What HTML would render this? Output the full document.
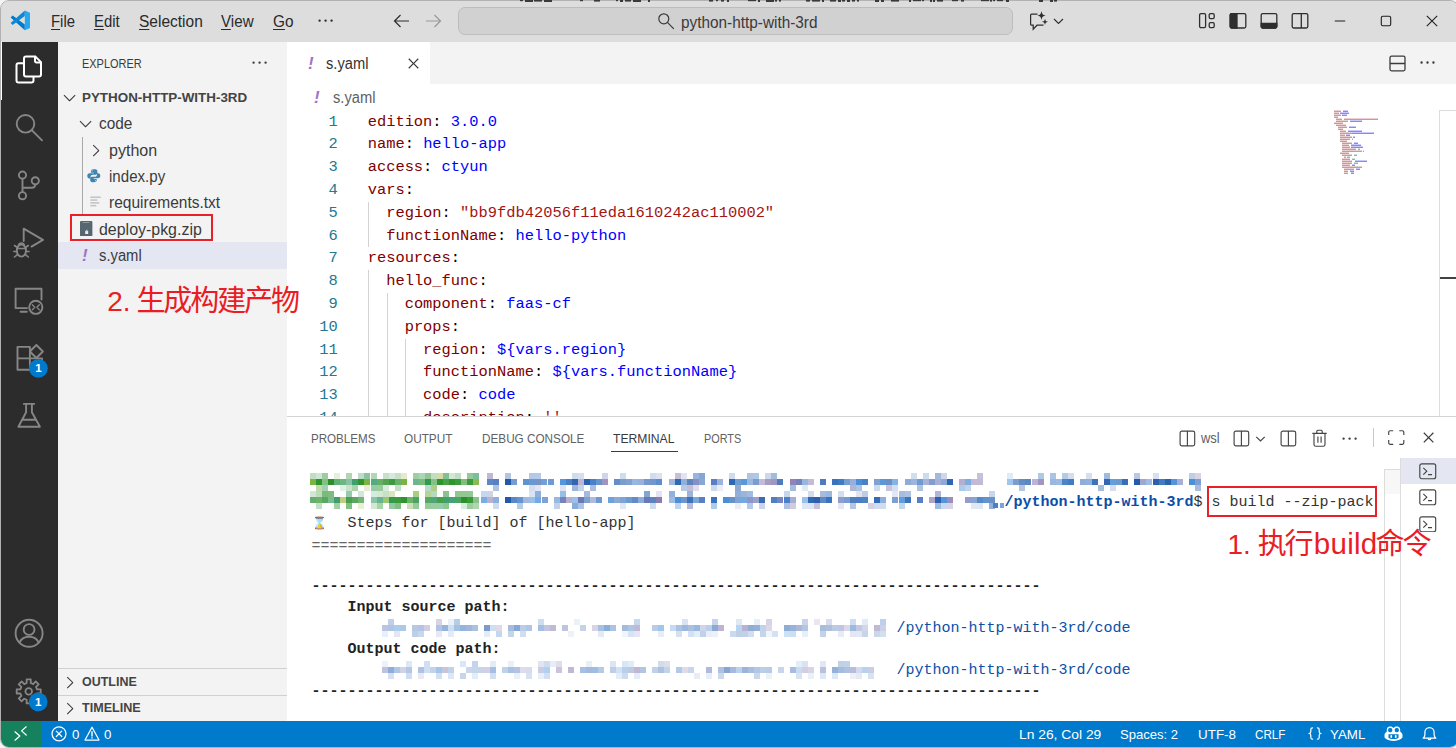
<!DOCTYPE html>
<html lang="en">
<head>
<meta charset="utf-8">
<title>s.yaml - python-http-with-3rd - Visual Studio Code</title>
<style>
#panel svg{z-index:2}
*{box-sizing:border-box;margin:0;padding:0}
html,body{width:1456px;height:748px;overflow:hidden;background:#f4f4f4}
body{position:relative;font-family:"Liberation Sans","Noto Sans CJK SC",sans-serif;color:#3b3b3b}
.abs{position:absolute}
#win{position:absolute;left:1px;top:1px;width:1457px;height:746px;border-radius:8px;overflow:hidden;background:#fff}
#edge{position:absolute;left:0;top:0;width:1459px;height:748px;border:1px solid #b2b2b2;border-radius:9px;pointer-events:none}
#title{left:0;top:0;width:1456px;height:41px;background:#dddddd}
.menu{position:absolute;top:9px;font-size:15.6px;line-height:24px;color:#2a2a2a;white-space:nowrap}
.menu u{text-decoration-thickness:1px;text-underline-offset:2px}
#search{left:457px;top:6px;width:555px;height:28px;border:1px solid #bdbdbd;border-radius:7px;background:#d1d1d1}
#search span{position:absolute;left:222.300px;top:3px;font-size:15.6px;line-height:24px;color:#3a3a3a;white-space:nowrap}
#act{left:0;top:41px;width:57px;height:680px;background:#2c2c2c}
#side{left:57px;top:41px;width:229px;height:680px;background:#f3f3f3}
.row{position:absolute;left:0;width:229px;height:26.400px;font-size:15.6px;line-height:26.400px;color:#3b3b3b;white-space:nowrap}
.row span{position:absolute;top:0}
.hdr{font-weight:bold;font-size:13.2px;color:#444}
.bang2{color:#a074c4;font-weight:bold;font-style:italic;font-size:17px}
#tabs{left:286px;top:41px;width:1170px;height:42px;background:#f3f3f3}
#tab{left:0;top:0;width:143px;height:42px;background:#fff}
#ed{left:286px;top:83px;width:1170px;height:332px;background:#fff;overflow:hidden}
.ln{position:absolute;left:0;width:50.800px;text-align:right;color:#237893;font-family:"Liberation Mono",monospace;font-size:15.4px;line-height:22.8px;height:22.8px}
.cl{position:absolute;left:80.700px;font-family:"Liberation Mono",monospace;font-size:15.4px;line-height:22.8px;height:22.8px;white-space:pre;color:#000}
.bc{left:0;top:0;width:1170px;height:26px;font-size:15.6px;line-height:26px;color:#616161}
.bang{position:absolute;top:0;color:#a074c4;font-weight:bold;font-style:italic;font-size:17px}
.k{color:#800000}.v{color:#0000ff}.s{color:#a31515}.p{color:#000}
.guide{position:absolute;width:1px;background:#d3d3d3}
#panel{left:286px;top:415px;width:1170px;height:306px;background:#fff;overflow:hidden}
.pt{position:absolute;top:15px;font-size:12.6px;line-height:16px;color:#616161;white-space:nowrap}
.tl{position:absolute;left:24.5px;font-family:"Liberation Mono",monospace;font-size:15px;line-height:21px;height:21px;white-space:pre;color:#333}
#status{left:0;top:720px;width:1457px;height:26px;background:#007acc;color:#fff;font-size:13.6px}
#status span{position:absolute;top:0;line-height:27px;white-space:nowrap}
.badge{width:19px;height:19px;line-height:19px;text-align:center;color:#fff;font-weight:bold;font-size:11.5px}
.cj{font-size:29px;letter-spacing:-2.100px}
.lt{font-size:29.500px;letter-spacing:0.300px;margin-left:2.300px;margin-right:-2px}
.red{color:#ea1c24;font-family:"Liberation Sans","Noto Sans CJK SC",sans-serif}
.rbox{position:absolute;border:2px solid #e8202a;z-index:8}
</style>
</head>
<body>
<div id="win">
  <div id="title" class="abs">
    <svg class="abs" style="left:9.200px;top:9.200px" width="20.600" height="20.600" viewBox="0 0 100 100"><path d="M3 37 13 27 72 71V98z" fill="#007acc"/><path d="M3 63 13 73 72 29V2z" fill="#1187d4"/><path d="M72 2 97 13V87L72 98z" fill="#25a8f0"/></svg>
    <div class="menu" style="left:50.200px;transform:scaleX(0.9546);transform-origin:0 50%"><u>F</u>ile</div>
    <div class="menu" style="left:92.800px;transform:scaleX(0.9557);transform-origin:0 50%"><u>E</u>dit</div>
    <div class="menu" style="left:138px;transform:scaleX(0.9944);transform-origin:0 50%"><u>S</u>election</div>
    <div class="menu" style="left:220px;transform:scaleX(0.9722);transform-origin:0 50%"><u>V</u>iew</div>
    <div class="menu" style="left:272px;transform:scaleX(0.9842);transform-origin:0 50%"><u>G</u>o</div>
    <svg class="abs" style="left:315.200px;top:9.800px" width="19.200" height="19.200" viewBox="0 0 16 16"><path fill="#2a2a2a" d="M4 8a1 1 0 1 1-2 0 1 1 0 0 1 2 0zm5 0a1 1 0 1 1-2 0 1 1 0 0 1 2 0zm5 0a1 1 0 1 1-2 0 1 1 0 0 1 2 0z"/></svg>

    <svg class="abs" style="left:392px;top:12px" width="17" height="16" viewBox="0 0 17 16" fill="none" stroke="#2e2e2e" stroke-width="1.2"><path d="M16 8H1.5M7.500 2 1.5 8 7.500 14"/></svg>
    <svg class="abs" style="left:424px;top:12px" width="17" height="16" viewBox="0 0 17 16" fill="none" stroke="#999999" stroke-width="1.2"><path d="M1 8h14.5M9.500 2 15.5 8 9.500 14"/></svg>
    <svg class="abs" style="left:1027px;top:9px" width="38" height="22" viewBox="0 0 38 22" fill="none" stroke="#2e2e2e" stroke-width="1.25"><path d="M9.500 4H3.600a1 1 0 0 0-1 1v9.200a1 1 0 0 0 1 1H5.200V19.200l3.800-4H15.500"/><path d="M13.5 1.2999999999999998C14.446 4.654 14.446 4.654 17.8 5.6C14.446 6.545999999999999 14.446 6.545999999999999 13.5 9.899999999999999C12.554 6.545999999999999 12.554 6.545999999999999 9.2 5.6C12.554 4.654 12.554 4.654 13.5 1.2999999999999998z" fill="#2e2e2e" stroke="none"/><path d="M17 8.700000000000001C17.682 11.118 17.682 11.118 20.1 11.8C17.682 12.482000000000001 17.682 12.482000000000001 17 14.9C16.318 12.482000000000001 16.318 12.482000000000001 13.9 11.8C16.318 11.118 16.318 11.118 17 8.700000000000001z" fill="#2e2e2e" stroke="none"/><path d="M26 9 30.500 13.400 35 9" stroke-width="1.100"/></svg>
    <svg class="abs" style="left:1197px;top:11px" width="18" height="18" viewBox="0 0 18 18" fill="none" stroke="#2e2e2e" stroke-width="1.3"><rect x="1.6" y="1.600" width="6" height="14" rx="1.300"/><rect x="11.200" y="1.600" width="5" height="5" rx="1.300"/><rect x="11.200" y="10.600" width="5" height="5" rx="1.300"/></svg>
    <svg class="abs" style="left:1228px;top:11px" width="18" height="18" viewBox="0 0 18 18" fill="none" stroke="#2e2e2e" stroke-width="1.3"><rect x="1.200" y="1.600" width="15.600" height="14.400" rx="1.500"/><path d="M1.200 3a1.400 1.400 0 0 1 1.400-1.400H8V16H2.600a1.400 1.400 0 0 1-1.400-1.400z" fill="#2e2e2e"/></svg>
    <svg class="abs" style="left:1259px;top:11px" width="18" height="18" viewBox="0 0 18 18" fill="none" stroke="#2e2e2e" stroke-width="1.3"><rect x="1.200" y="1.600" width="15.600" height="14.400" rx="1.500"/><path d="M1.200 11.500h15.600v3.100a1.400 1.400 0 0 1-1.400 1.400H2.600a1.400 1.400 0 0 1-1.400-1.400z" fill="#2e2e2e"/></svg>
    <svg class="abs" style="left:1290px;top:11px" width="18" height="18" viewBox="0 0 18 18" fill="none" stroke="#2e2e2e" stroke-width="1.3"><rect x="1.200" y="1.600" width="15.600" height="14.400" rx="1.500"/><path d="M10.300 1.600V16"/></svg>
    <svg class="abs" style="left:1333px;top:14px" width="12" height="12" viewBox="0 0 12 12" fill="none" stroke="#1f1f1f" stroke-width="1.1"><path d="M.8 6h10.400"/></svg>
    <svg class="abs" style="left:1379px;top:14px" width="12" height="12" viewBox="0 0 12 12" fill="none" stroke="#1f1f1f" stroke-width="1.1"><rect x="1.300" y="1.300" width="9.400" height="9.400" rx="1.500"/></svg>
    <svg class="abs" style="left:1425px;top:14px" width="12" height="12" viewBox="0 0 12 12" fill="none" stroke="#1f1f1f" stroke-width="1.1"><path d="M.8.8 11.200 11.200M11.200.8.8 11.200"/></svg>
    <svg class="abs" style="left:656px;top:11px;z-index:3" width="18" height="18" viewBox="0 0 18 18" fill="none" stroke="#3a3a3a" stroke-width="1.200"><circle cx="6.800" cy="6.800" r="5"/><path d="M10.400 10.400 16.800 16.800"/></svg>
    <div id="search" class="abs"><span style="transform:scaleX(0.9842);transform-origin:0 50%">python-http-with-3rd</span></div>
  </div>
  <div id="act" class="abs">
    <div class="abs" style="left:0;top:0;width:1.300px;height:58px;background:#fff"></div>
    <svg class="abs" style="left:1px;top:0" width="56" height="680" viewBox="0 0 56 680" fill="none" stroke="#868686" stroke-width="1.9" stroke-linejoin="round" stroke-linecap="round">
      <g stroke="#ffffff" stroke-width="2">
        <path d="M31.600 20.800v-6.200a2 2 0 0 0-2-2" stroke="none"/>
        <path d="M22 16.600a2 2 0 0 1 2-2h9.500l5.500 5.500v12.300a2 2 0 0 1-2 2h-13a2 2 0 0 1-2-2z"/>
        <path d="M33 14.800v4a1.600 1.600 0 0 0 1.600 1.600h4"/>
        <path d="M21.500 21.200h-5a2 2 0 0 0-2 2v15.400a2 2 0 0 0 2 2h13a2 2 0 0 0 2-2v-3.600"/>
      </g>
      <circle cx="23.500" cy="81.800" r="8.800"/><path d="M30 88.300 40 98.300"/>
      <circle cx="20.500" cy="133.100" r="3.600"/><circle cx="20.500" cy="153.700" r="3.600"/><circle cx="33.300" cy="138.800" r="3.600"/>
      <path d="M20.500 136.800V150M33.300 142.500c0 2.200-1.500 3.200-3.500 3.200H20.500"/>
      <path d="M21.700 199V186.600L41 197.900 29.500 204.600"/>
      <ellipse cx="19.400" cy="208.600" rx="4.600" ry="6"/><path d="M15 206.500h8.800M12.500 203.500l2.800 2M26.300 203.500l-2.800 2M11.800 209.500h3M27 209.500h-3M12.500 215l2.800-2.300M26.300 215l-2.800-2.300M16.500 203.300a3 3 0 0 1 5.800 0" stroke-width="1.6"/>
      <path d="M25 266.100H13.600V246.700H39.500V257.500M18.600 269.700H24.800"/>
      <circle cx="33.800" cy="265.300" r="6.600"/><path d="M30.300 262.800 32.800 265.300 30.300 267.800M37.300 262.800 34.800 265.300 37.300 267.800" stroke-width="1.300"/>
      <path d="M15.500 304.900H27.900V327.800H15.500zM15.500 316.400H40V327.800H27.900M27.900 316.400V327.800"/>
      <path d="M34.400 303 40.900 309.500 34.400 316 27.900 309.500z"/>
      <path d="M21.800 361.900H32.200M24.100 362V370.300L16.400 384.800H37.900L29.900 370.300V362M20.400 377.800H33.900"/>
      <circle cx="27.100" cy="591.300" r="13.500"/><circle cx="27.100" cy="587.500" r="5.400"/><path d="M17.500 600.500c2-4.300 5.500-5.800 9.600-5.800s7.600 1.500 9.600 5.800"/>
      <path d="M24.60 637.38 L28.80 637.38 L28.71 641.04 L31.19 642.07 L33.72 639.42 L36.68 642.38 L34.03 644.91 L35.06 647.39 L38.72 647.30 L38.72 651.50 L35.06 651.41 L34.03 653.89 L36.68 656.42 L33.72 659.38 L31.19 656.73 L28.71 657.76 L28.80 661.42 L24.60 661.42 L24.69 657.76 L22.21 656.73 L19.68 659.38 L16.72 656.42 L19.37 653.89 L18.34 651.41 L14.68 651.50 L14.68 647.30 L18.34 647.39 L19.37 644.91 L16.72 642.38 L19.68 639.42 L22.21 642.07 L24.69 641.04Z" stroke-width="1.800"/><circle cx="26.700" cy="649.400" r="3.300" stroke-width="1.800"/>
      <g stroke="none"><circle cx="36.400" cy="326.300" r="9.400" fill="#007acc"/><circle cx="36.200" cy="659.900" r="9.400" fill="#007acc"/></g>
    </svg>
    <div class="abs badge" style="left:28px;top:317px">1</div>
    <div class="abs badge" style="left:27.800px;top:650.600px">1</div>
  </div>
  <div id="side" class="abs"><svg class="abs" style="left:2px;top:45.8px" width="19.2" height="19.2" viewBox="0 0 16 16"><path fill="#3b3b3b" d="M7.976 10.072l4.357-4.357.62.618L8.284 11h-.618L3 6.333l.619-.618 4.357 4.357z"/></svg><svg class="abs" style="left:18.3px;top:72.2px" width="19.2" height="19.2" viewBox="0 0 16 16"><path fill="#3b3b3b" d="M7.976 10.072l4.357-4.357.62.618L8.284 11h-.618L3 6.333l.619-.618 4.357 4.357z"/></svg><svg class="abs" style="left:28px;top:98.6px" width="19.2" height="19.2" viewBox="0 0 16 16"><path fill="#3b3b3b" d="M10.072 8.024L5.715 3.667l.618-.62L11 7.716v.618L6.333 13l-.618-.619 4.357-4.357z"/></svg><svg class="abs" style="left:1.5px;top:630.5px" width="19.2" height="19.2" viewBox="0 0 16 16"><path fill="#3b3b3b" d="M10.072 8.024L5.715 3.667l.618-.62L11 7.716v.618L6.333 13l-.618-.619 4.357-4.357z"/></svg><svg class="abs" style="left:1.5px;top:656.5px" width="19.2" height="19.2" viewBox="0 0 16 16"><path fill="#3b3b3b" d="M10.072 8.024L5.715 3.667l.618-.62L11 7.716v.618L6.333 13l-.618-.619 4.357-4.357z"/></svg><svg class="abs" style="left:191.5px;top:10.5px" width="19.2" height="19.2" viewBox="0 0 16 16"><path fill="#3b3b3b" d="M4 8a1 1 0 1 1-2 0 1 1 0 0 1 2 0zm5 0a1 1 0 1 1-2 0 1 1 0 0 1 2 0zm5 0a1 1 0 1 1-2 0 1 1 0 0 1 2 0z"/></svg><div class="abs" style="left:24px;top:94.5px;width:1px;height:77px;background:#a9a9a9"></div><svg class="abs" style="left:29.2px;top:127px" width="13.6" height="13.6" viewBox="0 0 14 14"><path fill="#3f84b2" d="M6.900.3C4.900.3 4 1.100 4 2.300v1.500h3.100v.6H2.500C1.200 4.400.3 5.300.3 7s.8 2.700 2 2.700h1.400V8.100c0-1.200 1-2.100 2.200-2.100h3c1 0 1.800-.8 1.800-1.800V2.300c0-1.100-1-2-2.100-2zM5.300 1.300a.6.600 0 1 1 0 1.200.6.600 0 0 1 0-1.200z"/><path fill="#3f84b2" d="M7.100 13.700c2 0 2.900-.8 2.900-2v-1.500H6.900v-.6h4.600c1.300 0 2.200-.9 2.200-2.600s-.8-2.700-2-2.700h-1.400v1.600c0 1.200-1 2.100-2.200 2.100h-3c-1 0-1.800.8-1.800 1.800v1.900c0 1.100 1 2 2.100 2zm1.600-1a.6.600 0 1 1 0-1.200.6.600 0 0 1 0 1.200z"/></svg><svg class="abs" style="left:32px;top:154px" width="12" height="12" viewBox="0 0 12 12" fill="#c2c2c2"><rect x=".3" y=".5" width="10.500" height="1.500"/><rect x=".3" y="3.300" width="7" height="1.500"/><rect x=".3" y="6.100" width="9" height="1.500"/><rect x=".3" y="8.900" width="6" height="1.500"/></svg><svg class="abs" style="left:22.2px;top:178.6px" width="12.400" height="15.400" viewBox="0 0 12.400 15.400"><path fill="#56676f" d="M1.200 0h10a1.200 1.200 0 0 1 1.200 1.200v13a1.200 1.200 0 0 1-1.200 1.200h-10A1.200 1.200 0 0 1 0 14.200v-13A1.200 1.200 0 0 1 1.200 0z"/><rect x="2.500" y="1" width="7" height="1" fill="#8c999f"/><rect x="5.200" y="9.800" width="3" height="3.200" rx=".6" fill="#e9edef"/><rect x="6" y="8.800" width="1.400" height="1.600" fill="#b9c2c6"/></svg>
    <div class="abs" style="left:23.500px;top:13px;font-size:13px;line-height:18px;color:#3b3b3b;transform:scaleX(0.8431);transform-origin:0 50%">EXPLORER</div>
    <div class="row hdr" style="top:42.7px"><span style="left:23.5px;transform:scaleX(1.0157);transform-origin:0 50%">PYTHON-HTTP-WITH-3RD</span></div>
    <div class="row" style="top:69.1px"><span style="left:40.5px;transform:scaleX(0.9873);transform-origin:0 50%">code</span></div>
    <div class="row" style="top:95.5px"><span style="left:50.5px;transform:scaleX(1.0293);transform-origin:0 50%">python</span></div>
    <div class="row" style="top:121.9px"><span style="left:50.5px;transform:scaleX(0.9674);transform-origin:0 50%">index.py</span></div>
    <div class="row" style="top:148.3px"><span style="left:50.5px;transform:scaleX(0.9945);transform-origin:0 50%">requirements.txt</span></div>
    <div class="row" style="top:174.7px"><span style="left:40.5px;transform:scaleX(1.0222);transform-origin:0 50%">deploy-pkg.zip</span></div>
    <div class="row" style="top:200.400px;background:#e4e6f1"><span class="bang2" style="left:24px;top:0.700px">!</span><span style="left:40.500px;top:0.700px;transform:scaleX(0.9476);transform-origin:0 50%">s.yaml</span></div>
    <div class="rbox" style="left:12px;top:172px;width:143px;height:27px"></div>
    <div class="row hdr" style="top:626px;height:27px;border-top:1px solid #d0d0d0"><span style="left:23.500px;top:-0.200px;transform:scaleX(0.9449);transform-origin:0 50%">OUTLINE</span></div>
    <div class="row hdr" style="top:653px;height:27px;border-top:1px solid #d0d0d0"><span style="left:23.500px;top:-0.800px;transform:scaleX(0.9537);transform-origin:0 50%">TIMELINE</span></div>
  </div>
  <div id="tabs" class="abs"><svg class="abs" style="left:1101px;top:12px" width="19" height="19" viewBox="0 0 19 19" fill="none" stroke="#3b3b3b" stroke-width="1.300"><rect x="2" y="2.200" width="15" height="14.600" rx="1.500"/><path d="M2 9.500h15"/></svg>
<svg class="abs" style="left:1131px;top:11px" width="19" height="19" viewBox="0 0 16 16"><path fill="#3b3b3b" d="M4 8a1 1 0 1 1-2 0 1 1 0 0 1 2 0zm5 0a1 1 0 1 1-2 0 1 1 0 0 1 2 0zm5 0a1 1 0 1 1-2 0 1 1 0 0 1 2 0z"/></svg><div id="tab" class="abs"><span class="bang" style="left:21px;top:10.500px;font-size:17px;line-height:22px">!</span><svg class="abs" style="left:117px;top:12px" width="19" height="19" viewBox="0 0 16 16"><path fill="#3b3b3b" d="M8 8.707l3.646 3.647.708-.707L8.707 8l3.647-3.646-.707-.708L8 7.293 4.354 3.646l-.707.708L7.293 8l-3.646 3.646.707.708L8 8.707z"/></svg><span class="abs" style="left:38.500px;top:11.200px;font-size:15.6px;line-height:22px;color:#333;transform:scaleX(0.9409);transform-origin:0 50%">s.yaml</span></div></div>
  <div id="ed" class="abs"><div class="abs bc"><span class="bang" style="left:27px;top:1px">!</span><span class="abs" style="left:45.500px;top:1px;transform:scaleX(0.9431);transform-origin:0 50%">s.yaml</span></div><div class="ln" style="top:26.6px">1</div><div class="cl" style="top:26.6px"><span class="k">edition</span><span class="p">: </span><span class="v">3.0.0</span></div><div class="ln" style="top:49.4px">2</div><div class="cl" style="top:49.4px"><span class="k">name</span><span class="p">: </span><span class="v">hello-app</span></div><div class="ln" style="top:72.2px">3</div><div class="cl" style="top:72.2px"><span class="k">access</span><span class="p">: </span><span class="v">ctyun</span></div><div class="ln" style="top:95.0px">4</div><div class="cl" style="top:95.0px"><span class="k">vars</span><span class="p">:</span></div><div class="ln" style="top:117.8px">5</div><div class="cl" style="top:117.8px"><span class="p">  </span><span class="k">region</span><span class="p">: </span><span class="s">"bb9fdb42056f11eda1610242ac110002"</span></div><div class="ln" style="top:140.6px">6</div><div class="cl" style="top:140.6px"><span class="p">  </span><span class="k">functionName</span><span class="p">: </span><span class="v">hello-python</span></div><div class="ln" style="top:163.4px">7</div><div class="cl" style="top:163.4px"><span class="k">resources</span><span class="p">:</span></div><div class="ln" style="top:186.2px">8</div><div class="cl" style="top:186.2px"><span class="p">  </span><span class="k">hello_func</span><span class="p">:</span></div><div class="ln" style="top:209.0px">9</div><div class="cl" style="top:209.0px"><span class="p">    </span><span class="k">component</span><span class="p">: </span><span class="v">faas-cf</span></div><div class="ln" style="top:231.8px">10</div><div class="cl" style="top:231.8px"><span class="p">    </span><span class="k">props</span><span class="p">:</span></div><div class="ln" style="top:254.6px">11</div><div class="cl" style="top:254.6px"><span class="p">      </span><span class="k">region</span><span class="p">: </span><span class="v">${vars.region}</span></div><div class="ln" style="top:277.4px">12</div><div class="cl" style="top:277.4px"><span class="p">      </span><span class="k">functionName</span><span class="p">: </span><span class="v">${vars.functionName}</span></div><div class="ln" style="top:300.2px">13</div><div class="cl" style="top:300.2px"><span class="p">      </span><span class="k">code</span><span class="p">: </span><span class="v">code</span></div><div class="ln" style="top:323.0px">14</div><div class="cl" style="top:323.0px"><span class="p">      </span><span class="k">description</span><span class="p">: </span><span class="s">''</span></div><div class="guide" style="left:81px;top:117.8px;height:45.6px"></div><div class="guide" style="left:81px;top:186.2px;height:159.6px"></div><div class="guide" style="left:99.5px;top:209.0px;height:136.8px"></div><div class="guide" style="left:118px;top:254.6px;height:91.2px"></div><svg class="abs" style="left:0;top:0" width="1170" height="332"><rect x="1047" y="26.6" width="7" height="1.3" fill="#bf6f6f" opacity=".8"/><rect x="1056" y="26.6" width="5" height="1.3" fill="#5a5aff" opacity=".8"/><rect x="1047" y="28.6" width="5" height="1.3" fill="#bf6f6f" opacity=".8"/><rect x="1053" y="28.6" width="9" height="1.3" fill="#5a5aff" opacity=".8"/><rect x="1047" y="30.6" width="7" height="1.3" fill="#bf6f6f" opacity=".8"/><rect x="1055" y="30.6" width="5" height="1.3" fill="#5a5aff" opacity=".8"/><rect x="1047" y="32.6" width="4" height="1.3" fill="#bf6f6f" opacity=".8"/><rect x="1049" y="34.6" width="6" height="1.3" fill="#bf6f6f" opacity=".8"/><rect x="1057" y="34.6" width="34" height="1.3" fill="#c46a6a" opacity=".8"/><rect x="1049" y="36.6" width="12" height="1.3" fill="#bf6f6f" opacity=".8"/><rect x="1063" y="36.6" width="12" height="1.3" fill="#5a5aff" opacity=".8"/><rect x="1047" y="38.6" width="9" height="1.3" fill="#bf6f6f" opacity=".8"/><rect x="1049" y="40.6" width="10" height="1.3" fill="#bf6f6f" opacity=".8"/><rect x="1051" y="42.6" width="9" height="1.3" fill="#bf6f6f" opacity=".8"/><rect x="1062" y="42.6" width="7" height="1.3" fill="#5a5aff" opacity=".8"/><rect x="1051" y="44.6" width="5" height="1.3" fill="#bf6f6f" opacity=".8"/><rect x="1053" y="46.6" width="6" height="1.3" fill="#bf6f6f" opacity=".8"/><rect x="1061" y="46.6" width="14" height="1.3" fill="#5a5aff" opacity=".8"/><rect x="1053" y="48.6" width="12" height="1.3" fill="#bf6f6f" opacity=".8"/><rect x="1065" y="48.6" width="22" height="1.3" fill="#5a5aff" opacity=".8"/><rect x="1053" y="50.6" width="5" height="1.3" fill="#bf6f6f" opacity=".8"/><rect x="1059" y="50.6" width="4" height="1.3" fill="#5a5aff" opacity=".8"/><rect x="1053" y="52.6" width="12" height="1.3" fill="#bf6f6f" opacity=".8"/><rect x="1066" y="52.6" width="2" height="1.3" fill="#5a5aff" opacity=".8"/><rect x="1053" y="54.6" width="10" height="1.3" fill="#bf6f6f" opacity=".8"/><rect x="1065" y="54.6" width="1" height="1.3" fill="#4aa98a" opacity=".8"/><rect x="1053" y="56.6" width="7" height="1.3" fill="#bf6f6f" opacity=".8"/><rect x="1055" y="58.6" width="10" height="1.3" fill="#bf6f6f" opacity=".8"/><rect x="1067" y="58.6" width="4" height="1.3" fill="#5a5aff" opacity=".8"/><rect x="1055" y="60.6" width="7" height="1.3" fill="#bf6f6f" opacity=".8"/><rect x="1064" y="60.6" width="10" height="1.3" fill="#5a5aff" opacity=".8"/><rect x="1055" y="62.6" width="8" height="1.3" fill="#bf6f6f" opacity=".8"/><rect x="1064" y="62.6" width="12" height="1.3" fill="#5a5aff" opacity=".8"/><rect x="1055" y="64.6" width="14" height="1.3" fill="#bf6f6f" opacity=".8"/><rect x="1071" y="64.6" width="2" height="1.3" fill="#4aa98a" opacity=".8"/><rect x="1055" y="66.6" width="20" height="1.3" fill="#bf6f6f" opacity=".8"/><rect x="1076" y="66.6" width="1" height="1.3" fill="#4aa98a" opacity=".8"/><rect x="1053" y="68.6" width="9" height="1.3" fill="#bf6f6f" opacity=".8"/><rect x="1055" y="70.6" width="10" height="1.3" fill="#bf6f6f" opacity=".8"/><rect x="1067" y="70.6" width="3" height="1.3" fill="#4aa98a" opacity=".8"/><rect x="1057" y="72.6" width="2" height="1.3" fill="#bf6f6f" opacity=".8"/><rect x="1060" y="72.6" width="3" height="1.3" fill="#4aa98a" opacity=".8"/><rect x="1055" y="74.6" width="8" height="1.3" fill="#bf6f6f" opacity=".8"/><rect x="1065" y="74.6" width="3" height="1.3" fill="#4aa98a" opacity=".8"/><rect x="1055" y="76.6" width="10" height="1.3" fill="#bf6f6f" opacity=".8"/><rect x="1068" y="76.6" width="12" height="1.3" fill="#5a5aff" opacity=".8"/><rect x="1055" y="78.6" width="10" height="1.3" fill="#bf6f6f" opacity=".8"/><rect x="1067" y="78.6" width="4" height="1.3" fill="#4aa98a" opacity=".8"/><rect x="1055" y="80.6" width="8" height="1.3" fill="#bf6f6f" opacity=".8"/><rect x="1065" y="80.6" width="3" height="1.3" fill="#5a5aff" opacity=".8"/><rect x="1055" y="82.6" width="20" height="1.3" fill="#bf6f6f" opacity=".8"/><rect x="1057" y="84.6" width="10" height="1.3" fill="#bf6f6f" opacity=".8"/><rect x="1069" y="84.6" width="4" height="1.3" fill="#5a5aff" opacity=".8"/><rect x="1057" y="86.6" width="4" height="1.3" fill="#bf6f6f" opacity=".8"/><rect x="1063" y="86.6" width="4" height="1.3" fill="#5a5aff" opacity=".8"/><rect x="1057" y="88.6" width="4" height="1.3" fill="#bf6f6f" opacity=".8"/><rect x="1064" y="88.6" width="3" height="1.3" fill="#5a5aff" opacity=".8"/></svg><div class="abs" style="left:1152px;top:26px;width:18px;height:310px;border:1px solid #dcdcdc;border-right:0;background:#fff"></div><div class="abs" style="left:1153px;top:193px;width:17px;height:2px;background:#424242"></div></div>
  <div id="panel" class="abs">
    <div class="pt" style="left:24px;transform:scaleX(0.9200);transform-origin:0 50%">PROBLEMS</div>
    <div class="pt" style="left:116.700px;transform:scaleX(0.9347);transform-origin:0 50%">OUTPUT</div>
    <div class="pt" style="left:195px;transform:scaleX(0.9320);transform-origin:0 50%">DEBUG CONSOLE</div>
    <div class="pt" style="left:326.200px;color:#3b3b3b;transform:scaleX(0.9657);transform-origin:0 50%">TERMINAL</div>
    <div class="abs" style="left:324px;top:35px;width:67px;height:1px;background:#3b3b3b"></div>
    <div class="pt" style="left:416.800px;transform:scaleX(0.8620);transform-origin:0 50%">PORTS</div>
    <div class="pt" style="left:914px;top:15px;font-size:13.800px;transform:scaleX(0.9379);transform-origin:0 50%">wsl</div>
    <div class="abs" style="left:0;top:0;width:1170px;height:1px;background:#d4d4d4"></div>
    <svg class="abs" style="left:891.5px;top:14.2px" width="17" height="17" viewBox="0 0 17 17" fill="none" stroke="#444444" stroke-width="1.15"><rect x="1.100" y="1.100" width="14.600" height="14.800" rx="1.800"/><path d="M8.400 1.100V15.900"/></svg><svg class="abs" style="left:946.2px;top:14.2px" width="17" height="17" viewBox="0 0 17 17" fill="none" stroke="#444444" stroke-width="1.15"><rect x="1.100" y="1.100" width="14.600" height="14.800" rx="1.800"/><path d="M8.400 1.100V15.900"/></svg><svg class="abs" style="left:967.5px;top:17.5px" width="11" height="10" viewBox="0 0 11 10" fill="none" stroke="#444444" stroke-width="1.15" stroke-width="1.100"><path d="M1.300 2.800 5.500 7 9.700 2.800"/></svg><svg class="abs" style="left:993px;top:14.2px" width="17" height="17" viewBox="0 0 17 17" fill="none" stroke="#444444" stroke-width="1.15"><rect x="1.100" y="1.100" width="14.600" height="14.800" rx="1.800"/><path d="M8.400 1.100V15.900"/></svg><svg class="abs" style="left:1023.5px;top:13px" width="17" height="18.500" viewBox="0 0 17 18.500" fill="none" stroke="#444444" stroke-width="1.15"><path d="M1.300 4.300H15.700M5.800 4V2.400a1.200 1.200 0 0 1 1.200-1.200h3a1.200 1.200 0 0 1 1.200 1.200V4M3 4.500V15.400a1.800 1.800 0 0 0 1.800 1.800h7.400a1.800 1.800 0 0 0 1.800-1.800V4.500M6.900 7.600V13.700M10.100 7.600V13.700"/></svg><svg class="abs" style="left:1053.4px;top:13.2px" width="19.200" height="19.200" viewBox="0 0 16 16"><path fill="#3b3b3b" d="M4 8a1 1 0 1 1-2 0 1 1 0 0 1 2 0zm5 0a1 1 0 1 1-2 0 1 1 0 0 1 2 0zm5 0a1 1 0 1 1-2 0 1 1 0 0 1 2 0z"/></svg><div class="abs" style="left:1086px;top:12px;width:1px;height:19px;background:#c8c8c8"></div><svg class="abs" style="left:1101.4px;top:14.2px" width="16.500" height="15" viewBox="0 0 16.500 15" fill="none" stroke="#444444" stroke-width="1.15" stroke-width="1.300"><path d="M.7 5V2.200A1.500 1.500 0 0 1 2.200.7H5.200M11.300.7h3A1.500 1.500 0 0 1 15.800 2.200V5M15.800 10v2.800a1.500 1.500 0 0 1-1.500 1.500h-3M5.200 14.300h-3A1.500 1.500 0 0 1 .7 12.800V10"/></svg><svg class="abs" style="left:1131.6px;top:12.4px" width="19.200" height="19.200" viewBox="0 0 16 16"><path fill="#3b3b3b" d="M8 8.707l3.646 3.647.708-.707L8.707 8l3.647-3.646-.707-.708L8 7.293 4.354 3.646l-.707.708L7.293 8l-3.646 3.646.707.708L8 8.707z"/></svg><svg class="abs" style="left:1132.2px;top:47.0px" width="17.500" height="16.500" viewBox="0 0 17.500 16.500" fill="none" stroke="#444444" stroke-width="1.15" stroke-width="1.200"><rect x=".8" y=".8" width="15.900" height="14.900" rx="2"/><path d="M4.300 4.800 7.800 8.200 4.300 11.600M9 11.600H13"/></svg><svg class="abs" style="left:1132.2px;top:73.4px" width="17.500" height="16.500" viewBox="0 0 17.500 16.500" fill="none" stroke="#444444" stroke-width="1.15" stroke-width="1.200"><rect x=".8" y=".8" width="15.900" height="14.900" rx="2"/><path d="M4.300 4.800 7.800 8.200 4.300 11.600M9 11.600H13"/></svg><svg class="abs" style="left:1132.2px;top:99.8px" width="17.500" height="16.500" viewBox="0 0 17.500 16.500" fill="none" stroke="#444444" stroke-width="1.15" stroke-width="1.200"><rect x=".8" y=".8" width="15.900" height="14.900" rx="2"/><path d="M4.300 4.800 7.800 8.200 4.300 11.600M9 11.600H13"/></svg>
    <svg class="abs" style="left:0;top:0" width="1170" height="306" shape-rendering="crispEdges"><rect x="23.0" y="57.0" width="6.0" height="6.0" fill="#c1dec1"/><rect x="23.0" y="63.0" width="6.0" height="6.0" fill="#7db342"/><rect x="29.1" y="57.0" width="6.0" height="6.0" fill="#cee7d5"/><rect x="29.1" y="63.0" width="6.0" height="6.0" fill="#2e942e"/><rect x="29.1" y="69.1" width="6.0" height="6.0" fill="#c1dba4"/><rect x="35.1" y="57.0" width="6.0" height="6.0" fill="#9dce9f"/><rect x="35.1" y="63.0" width="6.0" height="6.0" fill="#83c083"/><rect x="35.1" y="69.1" width="6.0" height="6.0" fill="#a1d1b0"/><rect x="41.1" y="63.0" width="6.0" height="6.0" fill="#2c8f2c"/><rect x="47.2" y="57.0" width="6.0" height="6.0" fill="#e5f0da"/><rect x="47.2" y="63.0" width="6.0" height="6.0" fill="#60b077"/><rect x="53.2" y="63.0" width="6.0" height="6.0" fill="#6cb681"/><rect x="53.2" y="69.1" width="6.0" height="6.0" fill="#e0f0e5"/><rect x="59.3" y="57.0" width="6.0" height="6.0" fill="#b0d7b0"/><rect x="59.3" y="63.0" width="6.0" height="6.0" fill="#86c2a3"/><rect x="59.3" y="69.1" width="6.0" height="6.0" fill="#c8e3c8"/><rect x="65.3" y="63.0" width="6.0" height="6.0" fill="#3f9f6e"/><rect x="65.3" y="69.1" width="6.0" height="6.0" fill="#a9d3a9"/><rect x="71.4" y="57.0" width="6.0" height="6.0" fill="#bcdec6"/><rect x="71.4" y="63.0" width="6.0" height="6.0" fill="#2e942e"/><rect x="77.4" y="57.0" width="6.0" height="6.0" fill="#8ac69d"/><rect x="77.4" y="63.0" width="6.0" height="6.0" fill="#7db342"/><rect x="77.4" y="69.1" width="6.0" height="6.0" fill="#e9edd2"/><rect x="83.5" y="57.0" width="6.0" height="6.0" fill="#b1d8b3"/><rect x="83.5" y="63.0" width="6.0" height="6.0" fill="#55aa7f"/><rect x="83.5" y="69.1" width="6.0" height="6.0" fill="#95cba5"/><rect x="89.5" y="63.0" width="6.0" height="6.0" fill="#65b065"/><rect x="89.5" y="69.1" width="6.0" height="6.0" fill="#9bca9b"/><rect x="95.6" y="57.0" width="6.0" height="6.0" fill="#c5e2c7"/><rect x="95.6" y="63.0" width="6.0" height="6.0" fill="#52a352"/><rect x="95.6" y="69.1" width="6.0" height="6.0" fill="#d9ecd9"/><rect x="101.6" y="57.0" width="6.0" height="6.0" fill="#d5eadb"/><rect x="101.6" y="63.0" width="6.0" height="6.0" fill="#3f993f"/><rect x="107.7" y="57.0" width="6.0" height="6.0" fill="#c7e1c7"/><rect x="107.7" y="63.0" width="6.0" height="6.0" fill="#67b26a"/><rect x="107.7" y="69.1" width="6.0" height="6.0" fill="#c4e0c4"/><rect x="113.8" y="57.0" width="6.0" height="6.0" fill="#e5eac9"/><rect x="113.8" y="63.0" width="6.0" height="6.0" fill="#7db342"/><rect x="125.8" y="57.0" width="6.0" height="6.0" fill="#9fce9f"/><rect x="125.8" y="63.0" width="6.0" height="6.0" fill="#6bb590"/><rect x="131.9" y="57.0" width="6.0" height="6.0" fill="#abd5b7"/><rect x="131.9" y="63.0" width="6.0" height="6.0" fill="#7abb7a"/><rect x="137.9" y="57.0" width="6.0" height="6.0" fill="#92c592"/><rect x="137.9" y="63.0" width="6.0" height="6.0" fill="#2f9a50"/><rect x="137.9" y="69.1" width="6.0" height="6.0" fill="#b7dbc8"/><rect x="144.0" y="57.0" width="6.0" height="6.0" fill="#bfdfc0"/><rect x="144.0" y="63.0" width="6.0" height="6.0" fill="#85c187"/><rect x="144.0" y="69.1" width="6.0" height="6.0" fill="#acce86"/><rect x="150.1" y="57.0" width="6.0" height="6.0" fill="#d4dca5"/><rect x="150.1" y="63.0" width="6.0" height="6.0" fill="#2e942e"/><rect x="156.1" y="57.0" width="6.0" height="6.0" fill="#81c093"/><rect x="156.1" y="63.0" width="6.0" height="6.0" fill="#48a248"/><rect x="162.2" y="57.0" width="6.0" height="6.0" fill="#d1e8d1"/><rect x="162.2" y="63.0" width="6.0" height="6.0" fill="#2e942e"/><rect x="168.2" y="57.0" width="6.0" height="6.0" fill="#c1dec3"/><rect x="168.2" y="63.0" width="6.0" height="6.0" fill="#3a9b3a"/><rect x="174.2" y="63.0" width="6.0" height="6.0" fill="#81bc81"/><rect x="180.3" y="57.0" width="6.0" height="6.0" fill="#94c894"/><rect x="180.3" y="63.0" width="6.0" height="6.0" fill="#3a9b3a"/><rect x="186.3" y="57.0" width="6.0" height="6.0" fill="#7cbe9c"/><rect x="186.3" y="63.0" width="6.0" height="6.0" fill="#8abb55"/><rect x="23.0" y="75.0" width="6.0" height="6.0" fill="#d3e8d4"/><rect x="23.0" y="81.0" width="6.0" height="6.0" fill="#66ae6b"/><rect x="29.1" y="75.0" width="6.0" height="6.0" fill="#bddcbd"/><rect x="29.1" y="81.0" width="6.0" height="6.0" fill="#6eb26e"/><rect x="29.1" y="87.1" width="6.0" height="6.0" fill="#c2e0c3"/><rect x="35.1" y="75.0" width="6.0" height="6.0" fill="#7cb97c"/><rect x="35.1" y="81.0" width="6.0" height="6.0" fill="#5aa860"/><rect x="41.1" y="75.0" width="6.0" height="6.0" fill="#7dbd7d"/><rect x="41.1" y="81.0" width="6.0" height="6.0" fill="#78bd8d"/><rect x="47.2" y="81.0" width="6.0" height="6.0" fill="#3f9f6e"/><rect x="47.2" y="87.1" width="6.0" height="6.0" fill="#a4cfa4"/><rect x="53.2" y="81.0" width="6.0" height="6.0" fill="#c1cd7f"/><rect x="59.3" y="75.0" width="6.0" height="6.0" fill="#97cbb0"/><rect x="59.3" y="81.0" width="6.0" height="6.0" fill="#4a9f4a"/><rect x="59.3" y="87.1" width="6.0" height="6.0" fill="#82c082"/><rect x="65.3" y="81.0" width="6.0" height="6.0" fill="#5aa860"/><rect x="71.4" y="75.0" width="6.0" height="6.0" fill="#d1e8d8"/><rect x="71.4" y="81.0" width="6.0" height="6.0" fill="#73b578"/><rect x="71.4" y="87.1" width="6.0" height="6.0" fill="#eaeed3"/><rect x="83.5" y="75.0" width="6.0" height="6.0" fill="#d6ebe0"/><rect x="83.5" y="81.0" width="6.0" height="6.0" fill="#89c4a6"/><rect x="83.5" y="87.1" width="6.0" height="6.0" fill="#d3e8d3"/><rect x="89.5" y="75.0" width="6.0" height="6.0" fill="#d3e9d4"/><rect x="89.5" y="81.0" width="6.0" height="6.0" fill="#69b48e"/><rect x="89.5" y="87.1" width="6.0" height="6.0" fill="#a9d3a9"/><rect x="95.6" y="75.0" width="6.0" height="6.0" fill="#c7e1c9"/><rect x="95.6" y="81.0" width="6.0" height="6.0" fill="#9dc670"/><rect x="101.6" y="75.0" width="6.0" height="6.0" fill="#dee4b9"/><rect x="101.6" y="81.0" width="6.0" height="6.0" fill="#2f9a50"/><rect x="101.6" y="87.1" width="6.0" height="6.0" fill="#91c8a1"/><rect x="107.7" y="81.0" width="6.0" height="6.0" fill="#3a9a3a"/><rect x="107.7" y="87.1" width="6.0" height="6.0" fill="#81bf81"/><rect x="113.8" y="81.0" width="6.0" height="6.0" fill="#2e942e"/><rect x="119.8" y="81.0" width="6.0" height="6.0" fill="#6bb46b"/><rect x="119.8" y="87.1" width="6.0" height="6.0" fill="#cbe1b4"/><rect x="125.8" y="75.0" width="6.0" height="6.0" fill="#a9cd82"/><rect x="125.8" y="81.0" width="6.0" height="6.0" fill="#4aa564"/><rect x="125.8" y="87.1" width="6.0" height="6.0" fill="#98c99c"/><rect x="137.9" y="75.0" width="6.0" height="6.0" fill="#b6d495"/><rect x="137.9" y="81.0" width="6.0" height="6.0" fill="#52a96b"/><rect x="137.9" y="87.1" width="6.0" height="6.0" fill="#97ca97"/><rect x="144.0" y="75.0" width="6.0" height="6.0" fill="#b4dabf"/><rect x="144.0" y="81.0" width="6.0" height="6.0" fill="#4ea679"/><rect x="144.0" y="87.1" width="6.0" height="6.0" fill="#9dcb9d"/><rect x="150.1" y="81.0" width="6.0" height="6.0" fill="#46a046"/><rect x="150.1" y="87.1" width="6.0" height="6.0" fill="#96cbb0"/><rect x="156.1" y="75.0" width="6.0" height="6.0" fill="#8bc28f"/><rect x="156.1" y="81.0" width="6.0" height="6.0" fill="#41a070"/><rect x="156.1" y="87.1" width="6.0" height="6.0" fill="#8ec690"/><rect x="162.2" y="81.0" width="6.0" height="6.0" fill="#45a273"/><rect x="168.2" y="75.0" width="6.0" height="6.0" fill="#90c790"/><rect x="168.2" y="81.0" width="6.0" height="6.0" fill="#4aa564"/><rect x="174.2" y="75.0" width="6.0" height="6.0" fill="#93c693"/><rect x="174.2" y="81.0" width="6.0" height="6.0" fill="#2c8f2c"/><rect x="174.2" y="87.1" width="6.0" height="6.0" fill="#d7ecdd"/><rect x="180.3" y="75.0" width="6.0" height="6.0" fill="#92c892"/><rect x="180.3" y="81.0" width="6.0" height="6.0" fill="#3a9b3a"/><rect x="180.3" y="87.1" width="6.0" height="6.0" fill="#9bcd9d"/><rect x="186.3" y="81.0" width="6.0" height="6.0" fill="#8ac18e"/><rect x="186.3" y="87.1" width="6.0" height="6.0" fill="#b0d5b0"/><rect x="200.0" y="57.0" width="6.0" height="6.0" fill="#c0b9d5"/><rect x="200.0" y="63.0" width="6.0" height="6.0" fill="#5e88c3"/><rect x="206.1" y="63.0" width="6.0" height="6.0" fill="#5b7fc4"/><rect x="206.1" y="69.1" width="6.0" height="6.0" fill="#b1c2e3"/><rect x="218.2" y="57.0" width="6.0" height="6.0" fill="#b0c6e3"/><rect x="218.2" y="63.0" width="6.0" height="6.0" fill="#2458a8"/><rect x="224.2" y="63.0" width="6.0" height="6.0" fill="#749cd3"/><rect x="236.3" y="63.0" width="6.0" height="6.0" fill="#6092ce"/><rect x="242.3" y="57.0" width="6.0" height="6.0" fill="#b2cae7"/><rect x="242.3" y="63.0" width="6.0" height="6.0" fill="#6c98d2"/><rect x="242.3" y="69.1" width="6.0" height="6.0" fill="#d1dff1"/><rect x="248.4" y="57.0" width="6.0" height="6.0" fill="#b3cae8"/><rect x="248.4" y="63.0" width="6.0" height="6.0" fill="#7395c8"/><rect x="248.4" y="69.1" width="6.0" height="6.0" fill="#e3e6f2"/><rect x="254.4" y="63.0" width="6.0" height="6.0" fill="#739fd4"/><rect x="260.5" y="63.0" width="6.0" height="6.0" fill="#6f9ad3"/><rect x="272.6" y="63.0" width="6.0" height="6.0" fill="#5597da"/><rect x="272.6" y="69.1" width="6.0" height="6.0" fill="#dfe2f0"/><rect x="278.6" y="63.0" width="6.0" height="6.0" fill="#4a80c8"/><rect x="284.7" y="57.0" width="6.0" height="6.0" fill="#cdddf0"/><rect x="284.7" y="63.0" width="6.0" height="6.0" fill="#3665af"/><rect x="284.7" y="69.1" width="6.0" height="6.0" fill="#9fb6d9"/><rect x="290.8" y="57.0" width="6.0" height="6.0" fill="#d6dff0"/><rect x="290.8" y="63.0" width="6.0" height="6.0" fill="#bdb5d3"/><rect x="290.8" y="69.1" width="6.0" height="6.0" fill="#c2d3eb"/><rect x="296.8" y="63.0" width="6.0" height="6.0" fill="#2a62b0"/><rect x="302.9" y="63.0" width="6.0" height="6.0" fill="#4a80c8"/><rect x="302.9" y="69.1" width="6.0" height="6.0" fill="#abbee1"/><rect x="308.9" y="63.0" width="6.0" height="6.0" fill="#6395cf"/><rect x="314.9" y="57.0" width="6.0" height="6.0" fill="#d0d5e9"/><rect x="314.9" y="63.0" width="6.0" height="6.0" fill="#a195bf"/><rect x="327.1" y="63.0" width="6.0" height="6.0" fill="#658ec6"/><rect x="333.1" y="57.0" width="6.0" height="6.0" fill="#cddcf0"/><rect x="333.1" y="63.0" width="6.0" height="6.0" fill="#789dce"/><rect x="339.1" y="63.0" width="6.0" height="6.0" fill="#839fd3"/><rect x="345.2" y="63.0" width="6.0" height="6.0" fill="#96b7df"/><rect x="351.2" y="63.0" width="6.0" height="6.0" fill="#9bb1db"/><rect x="357.3" y="63.0" width="6.0" height="6.0" fill="#7997cf"/><rect x="363.4" y="57.0" width="6.0" height="6.0" fill="#d1ddee"/><rect x="363.4" y="63.0" width="6.0" height="6.0" fill="#7198cc"/><rect x="369.4" y="57.0" width="6.0" height="6.0" fill="#dee1ef"/><rect x="369.4" y="63.0" width="6.0" height="6.0" fill="#5c90cd"/><rect x="381.5" y="63.0" width="6.0" height="6.0" fill="#a1b6dd"/><rect x="387.5" y="57.0" width="6.0" height="6.0" fill="#c6bfd8"/><rect x="387.5" y="63.0" width="6.0" height="6.0" fill="#2f68b4"/><rect x="393.6" y="57.0" width="6.0" height="6.0" fill="#e2e5f1"/><rect x="393.6" y="63.0" width="6.0" height="6.0" fill="#92b0d8"/><rect x="393.6" y="69.1" width="6.0" height="6.0" fill="#b6cae5"/><rect x="399.6" y="63.0" width="6.0" height="6.0" fill="#5f85bf"/><rect x="399.6" y="69.1" width="6.0" height="6.0" fill="#c4bdd7"/><rect x="405.7" y="57.0" width="6.0" height="6.0" fill="#96b5df"/><rect x="405.7" y="63.0" width="6.0" height="6.0" fill="#8591c5"/><rect x="405.7" y="69.1" width="6.0" height="6.0" fill="#e1ddeb"/><rect x="411.8" y="57.0" width="6.0" height="6.0" fill="#85a5d2"/><rect x="411.8" y="63.0" width="6.0" height="6.0" fill="#88a7d3"/><rect x="423.9" y="63.0" width="6.0" height="6.0" fill="#5b7fc4"/><rect x="423.9" y="69.1" width="6.0" height="6.0" fill="#ccdaef"/><rect x="429.9" y="63.0" width="6.0" height="6.0" fill="#9fb4dc"/><rect x="429.9" y="69.1" width="6.0" height="6.0" fill="#e9eef7"/><rect x="442.0" y="57.0" width="6.0" height="6.0" fill="#d0daee"/><rect x="442.0" y="63.0" width="6.0" height="6.0" fill="#2f68b4"/><rect x="448.0" y="63.0" width="6.0" height="6.0" fill="#709ed3"/><rect x="448.0" y="69.1" width="6.0" height="6.0" fill="#90aad3"/><rect x="454.1" y="63.0" width="6.0" height="6.0" fill="#5798db"/><rect x="460.1" y="57.0" width="6.0" height="6.0" fill="#afc4e1"/><rect x="460.1" y="63.0" width="6.0" height="6.0" fill="#9ab8e0"/><rect x="466.2" y="57.0" width="6.0" height="6.0" fill="#afc8e6"/><rect x="466.2" y="63.0" width="6.0" height="6.0" fill="#7a9dce"/><rect x="472.2" y="63.0" width="6.0" height="6.0" fill="#c4bcd7"/><rect x="478.3" y="57.0" width="6.0" height="6.0" fill="#ccd8eb"/><rect x="478.3" y="63.0" width="6.0" height="6.0" fill="#a79cc3"/><rect x="484.3" y="57.0" width="6.0" height="6.0" fill="#a3bbdd"/><rect x="484.3" y="63.0" width="6.0" height="6.0" fill="#a196c0"/><rect x="490.4" y="63.0" width="6.0" height="6.0" fill="#4c7dbe"/><rect x="502.5" y="63.0" width="6.0" height="6.0" fill="#9183b5"/><rect x="502.5" y="69.1" width="6.0" height="6.0" fill="#a1bde2"/><rect x="508.6" y="63.0" width="6.0" height="6.0" fill="#7481bd"/><rect x="514.6" y="63.0" width="6.0" height="6.0" fill="#98b7e0"/><rect x="514.6" y="69.1" width="6.0" height="6.0" fill="#e0e9f5"/><rect x="520.6" y="63.0" width="6.0" height="6.0" fill="#c3bcd7"/><rect x="532.8" y="63.0" width="6.0" height="6.0" fill="#507aba"/><rect x="544.8" y="63.0" width="6.0" height="6.0" fill="#3a72c0"/><rect x="550.9" y="63.0" width="6.0" height="6.0" fill="#3f7cc4"/><rect x="557.0" y="63.0" width="6.0" height="6.0" fill="#739fd4"/><rect x="563.0" y="63.0" width="6.0" height="6.0" fill="#98afda"/><rect x="563.0" y="69.1" width="6.0" height="6.0" fill="#aeb5d8"/><rect x="569.0" y="63.0" width="6.0" height="6.0" fill="#4a90d8"/><rect x="569.0" y="69.1" width="6.0" height="6.0" fill="#adc3e1"/><rect x="575.1" y="63.0" width="6.0" height="6.0" fill="#4a80c8"/><rect x="587.2" y="63.0" width="6.0" height="6.0" fill="#81a2d0"/><rect x="587.2" y="69.1" width="6.0" height="6.0" fill="#cedbed"/><rect x="593.2" y="63.0" width="6.0" height="6.0" fill="#5999db"/><rect x="599.3" y="63.0" width="6.0" height="6.0" fill="#6990c7"/><rect x="599.3" y="69.1" width="6.0" height="6.0" fill="#c9c3db"/><rect x="605.3" y="63.0" width="6.0" height="6.0" fill="#84b4e5"/><rect x="605.3" y="69.1" width="6.0" height="6.0" fill="#d6dff0"/><rect x="617.5" y="63.0" width="6.0" height="6.0" fill="#92aad8"/><rect x="623.5" y="57.0" width="6.0" height="6.0" fill="#d1def0"/><rect x="623.5" y="63.0" width="6.0" height="6.0" fill="#9fb4dc"/><rect x="629.5" y="63.0" width="6.0" height="6.0" fill="#6d9bd2"/><rect x="629.5" y="69.1" width="6.0" height="6.0" fill="#b0c3e0"/><rect x="635.6" y="57.0" width="6.0" height="6.0" fill="#ccdcef"/><rect x="635.6" y="63.0" width="6.0" height="6.0" fill="#aab2d6"/><rect x="641.6" y="63.0" width="6.0" height="6.0" fill="#819dd2"/><rect x="647.7" y="57.0" width="6.0" height="6.0" fill="#a1b9dc"/><rect x="647.7" y="63.0" width="6.0" height="6.0" fill="#a8b0d5"/><rect x="653.8" y="57.0" width="6.0" height="6.0" fill="#d1d5e9"/><rect x="653.8" y="63.0" width="6.0" height="6.0" fill="#8baad5"/><rect x="659.8" y="63.0" width="6.0" height="6.0" fill="#2f65b2"/><rect x="671.9" y="63.0" width="6.0" height="6.0" fill="#b6aece"/><rect x="671.9" y="69.1" width="6.0" height="6.0" fill="#abcbed"/><rect x="678.0" y="63.0" width="6.0" height="6.0" fill="#7aade2"/><rect x="678.0" y="69.1" width="6.0" height="6.0" fill="#c1d2e9"/><rect x="684.0" y="63.0" width="6.0" height="6.0" fill="#c2bad6"/><rect x="690.0" y="57.0" width="6.0" height="6.0" fill="#c7c0d9"/><rect x="690.0" y="63.0" width="6.0" height="6.0" fill="#c2bbd6"/><rect x="720.3" y="57.0" width="6.0" height="6.0" fill="#deebf8"/><rect x="720.3" y="63.0" width="6.0" height="6.0" fill="#a1c5eb"/><rect x="726.4" y="63.0" width="6.0" height="6.0" fill="#7d9ccc"/><rect x="732.4" y="63.0" width="6.0" height="6.0" fill="#638cc5"/><rect x="732.4" y="69.1" width="6.0" height="6.0" fill="#b3c7e3"/><rect x="738.4" y="63.0" width="6.0" height="6.0" fill="#5c87c3"/><rect x="744.5" y="63.0" width="6.0" height="6.0" fill="#bcb4d2"/><rect x="750.5" y="57.0" width="6.0" height="6.0" fill="#aec8e6"/><rect x="750.5" y="63.0" width="6.0" height="6.0" fill="#a196bf"/><rect x="762.6" y="57.0" width="6.0" height="6.0" fill="#a9c5e5"/><rect x="762.6" y="63.0" width="6.0" height="6.0" fill="#9ab7df"/><rect x="768.7" y="63.0" width="6.0" height="6.0" fill="#9cbbe1"/><rect x="774.8" y="57.0" width="6.0" height="6.0" fill="#b3cbe8"/><rect x="774.8" y="63.0" width="6.0" height="6.0" fill="#4e83c9"/><rect x="780.8" y="57.0" width="6.0" height="6.0" fill="#d4dfee"/><rect x="780.8" y="63.0" width="6.0" height="6.0" fill="#3f7cc4"/><rect x="792.9" y="63.0" width="6.0" height="6.0" fill="#8faed7"/><rect x="798.9" y="57.0" width="6.0" height="6.0" fill="#d5dfee"/><rect x="798.9" y="63.0" width="6.0" height="6.0" fill="#90b1dd"/><rect x="805.0" y="63.0" width="6.0" height="6.0" fill="#3e73b9"/><rect x="811.0" y="69.1" width="6.0" height="6.0" fill="#a8bddc"/><rect x="817.1" y="57.0" width="6.0" height="6.0" fill="#9ebbe2"/><rect x="817.1" y="63.0" width="6.0" height="6.0" fill="#3666af"/><rect x="823.1" y="63.0" width="6.0" height="6.0" fill="#629fdd"/><rect x="823.1" y="69.1" width="6.0" height="6.0" fill="#d6dff0"/><rect x="829.2" y="63.0" width="6.0" height="6.0" fill="#6b9ad1"/><rect x="835.2" y="63.0" width="6.0" height="6.0" fill="#396db5"/><rect x="847.4" y="57.0" width="6.0" height="6.0" fill="#b8c8e6"/><rect x="847.4" y="63.0" width="6.0" height="6.0" fill="#2458a8"/><rect x="853.4" y="63.0" width="6.0" height="6.0" fill="#a0a8d1"/><rect x="859.4" y="63.0" width="6.0" height="6.0" fill="#a2bde3"/><rect x="865.5" y="57.0" width="6.0" height="6.0" fill="#d5e1f2"/><rect x="865.5" y="63.0" width="6.0" height="6.0" fill="#2d5fac"/><rect x="871.5" y="63.0" width="6.0" height="6.0" fill="#3f7cc4"/><rect x="877.6" y="63.0" width="6.0" height="6.0" fill="#2a62b0"/><rect x="883.6" y="63.0" width="6.0" height="6.0" fill="#5295da"/><rect x="889.7" y="63.0" width="6.0" height="6.0" fill="#a7afd5"/><rect x="901.8" y="57.0" width="6.0" height="6.0" fill="#bfcee5"/><rect x="901.8" y="63.0" width="6.0" height="6.0" fill="#4c91d8"/><rect x="907.9" y="57.0" width="6.0" height="6.0" fill="#d8d3e5"/><rect x="907.9" y="63.0" width="6.0" height="6.0" fill="#819dd2"/><rect x="907.9" y="69.1" width="6.0" height="6.0" fill="#a6bdde"/><rect x="194.0" y="75.0" width="6.0" height="6.0" fill="#c6d8ed"/><rect x="194.0" y="81.0" width="6.0" height="6.0" fill="#7aaee2"/><rect x="200.1" y="75.0" width="6.0" height="6.0" fill="#cfd3e8"/><rect x="200.1" y="81.0" width="6.0" height="6.0" fill="#bab2d1"/><rect x="206.1" y="81.0" width="6.0" height="6.0" fill="#8fafdb"/><rect x="206.1" y="87.1" width="6.0" height="6.0" fill="#cedcef"/><rect x="218.2" y="81.0" width="6.0" height="6.0" fill="#2458a8"/><rect x="224.2" y="81.0" width="6.0" height="6.0" fill="#5988ca"/><rect x="230.3" y="81.0" width="6.0" height="6.0" fill="#6495cf"/><rect x="230.3" y="87.1" width="6.0" height="6.0" fill="#b4cce8"/><rect x="236.3" y="81.0" width="6.0" height="6.0" fill="#a4b8de"/><rect x="242.4" y="75.0" width="6.0" height="6.0" fill="#dbe3f2"/><rect x="242.4" y="81.0" width="6.0" height="6.0" fill="#99c0e9"/><rect x="248.4" y="75.0" width="6.0" height="6.0" fill="#8db1dc"/><rect x="248.4" y="81.0" width="6.0" height="6.0" fill="#74a9e1"/><rect x="254.5" y="81.0" width="6.0" height="6.0" fill="#7fa3d6"/><rect x="266.6" y="81.0" width="6.0" height="6.0" fill="#98b9df"/><rect x="266.6" y="87.1" width="6.0" height="6.0" fill="#c2d0e9"/><rect x="272.6" y="75.0" width="6.0" height="6.0" fill="#96bfe8"/><rect x="272.6" y="81.0" width="6.0" height="6.0" fill="#7582bd"/><rect x="278.7" y="81.0" width="6.0" height="6.0" fill="#b8afcf"/><rect x="284.8" y="81.0" width="6.0" height="6.0" fill="#9bc1e9"/><rect x="284.8" y="87.1" width="6.0" height="6.0" fill="#8baad4"/><rect x="290.8" y="81.0" width="6.0" height="6.0" fill="#6a78b8"/><rect x="290.8" y="87.1" width="6.0" height="6.0" fill="#acc5e6"/><rect x="296.9" y="75.0" width="6.0" height="6.0" fill="#a5b9df"/><rect x="296.9" y="81.0" width="6.0" height="6.0" fill="#7ea1d0"/><rect x="302.9" y="81.0" width="6.0" height="6.0" fill="#b2badb"/><rect x="308.9" y="81.0" width="6.0" height="6.0" fill="#6e99d3"/><rect x="321.1" y="81.0" width="6.0" height="6.0" fill="#6aa3df"/><rect x="327.1" y="81.0" width="6.0" height="6.0" fill="#8ea9d2"/><rect x="333.1" y="81.0" width="6.0" height="6.0" fill="#7ea3d6"/><rect x="333.1" y="87.1" width="6.0" height="6.0" fill="#dfe8f3"/><rect x="339.2" y="81.0" width="6.0" height="6.0" fill="#6c9bd2"/><rect x="345.2" y="81.0" width="6.0" height="6.0" fill="#6889c9"/><rect x="351.3" y="81.0" width="6.0" height="6.0" fill="#8cadda"/><rect x="357.4" y="75.0" width="6.0" height="6.0" fill="#83a5d2"/><rect x="357.4" y="81.0" width="6.0" height="6.0" fill="#6a78b8"/><rect x="363.4" y="81.0" width="6.0" height="6.0" fill="#5d83bf"/><rect x="363.4" y="87.1" width="6.0" height="6.0" fill="#ccdcef"/><rect x="369.4" y="75.0" width="6.0" height="6.0" fill="#e2e5f1"/><rect x="369.4" y="81.0" width="6.0" height="6.0" fill="#8b7db1"/><rect x="381.5" y="75.0" width="6.0" height="6.0" fill="#93b1dc"/><rect x="381.5" y="81.0" width="6.0" height="6.0" fill="#9ebbe2"/><rect x="387.6" y="81.0" width="6.0" height="6.0" fill="#4a90d8"/><rect x="387.6" y="87.1" width="6.0" height="6.0" fill="#c0d4ec"/><rect x="393.6" y="81.0" width="6.0" height="6.0" fill="#6f95ca"/><rect x="399.7" y="75.0" width="6.0" height="6.0" fill="#9db4d8"/><rect x="399.7" y="81.0" width="6.0" height="6.0" fill="#3d72b9"/><rect x="399.7" y="87.1" width="6.0" height="6.0" fill="#b3badb"/><rect x="405.8" y="81.0" width="6.0" height="6.0" fill="#7ea7d7"/><rect x="411.8" y="81.0" width="6.0" height="6.0" fill="#5b7fc4"/><rect x="423.9" y="81.0" width="6.0" height="6.0" fill="#3a72c0"/><rect x="423.9" y="87.1" width="6.0" height="6.0" fill="#abcbed"/><rect x="436.0" y="81.0" width="6.0" height="6.0" fill="#4a90d8"/><rect x="442.0" y="81.0" width="6.0" height="6.0" fill="#6791c8"/><rect x="448.1" y="75.0" width="6.0" height="6.0" fill="#91afd7"/><rect x="448.1" y="81.0" width="6.0" height="6.0" fill="#80a4d6"/><rect x="448.1" y="87.1" width="6.0" height="6.0" fill="#edebf3"/><rect x="454.1" y="75.0" width="6.0" height="6.0" fill="#9cb4d8"/><rect x="454.1" y="81.0" width="6.0" height="6.0" fill="#73a9e1"/><rect x="460.2" y="75.0" width="6.0" height="6.0" fill="#a1bce1"/><rect x="460.2" y="81.0" width="6.0" height="6.0" fill="#8c97c8"/><rect x="460.2" y="87.1" width="6.0" height="6.0" fill="#b3c9e7"/><rect x="466.2" y="81.0" width="6.0" height="6.0" fill="#97a1ce"/><rect x="472.3" y="81.0" width="6.0" height="6.0" fill="#3e6cb2"/><rect x="472.3" y="87.1" width="6.0" height="6.0" fill="#c9d5eb"/><rect x="484.4" y="81.0" width="6.0" height="6.0" fill="#5280bf"/><rect x="490.4" y="81.0" width="6.0" height="6.0" fill="#7985bf"/><rect x="496.5" y="75.0" width="6.0" height="6.0" fill="#c8d7eb"/><rect x="496.5" y="81.0" width="6.0" height="6.0" fill="#4a80c8"/><rect x="496.5" y="87.1" width="6.0" height="6.0" fill="#afc1e2"/><rect x="502.6" y="81.0" width="6.0" height="6.0" fill="#a5aed4"/><rect x="502.6" y="87.1" width="6.0" height="6.0" fill="#d1cbe0"/><rect x="514.6" y="81.0" width="6.0" height="6.0" fill="#99c1e9"/><rect x="514.6" y="87.1" width="6.0" height="6.0" fill="#dee5f3"/><rect x="520.7" y="75.0" width="6.0" height="6.0" fill="#d2deef"/><rect x="520.7" y="81.0" width="6.0" height="6.0" fill="#2f68b4"/><rect x="520.7" y="87.1" width="6.0" height="6.0" fill="#dde8f4"/><rect x="526.8" y="81.0" width="6.0" height="6.0" fill="#2d5fac"/><rect x="526.8" y="87.1" width="6.0" height="6.0" fill="#c7c1d9"/><rect x="532.8" y="75.0" width="6.0" height="6.0" fill="#a7bcdc"/><rect x="532.8" y="81.0" width="6.0" height="6.0" fill="#6186c0"/><rect x="538.8" y="75.0" width="6.0" height="6.0" fill="#99bae0"/><rect x="538.8" y="81.0" width="6.0" height="6.0" fill="#3a72c0"/><rect x="551.0" y="75.0" width="6.0" height="6.0" fill="#d3dff1"/><rect x="551.0" y="81.0" width="6.0" height="6.0" fill="#929dcb"/><rect x="551.0" y="87.1" width="6.0" height="6.0" fill="#e4e6f2"/><rect x="557.0" y="81.0" width="6.0" height="6.0" fill="#749dd5"/><rect x="563.0" y="81.0" width="6.0" height="6.0" fill="#517ebe"/><rect x="563.0" y="87.1" width="6.0" height="6.0" fill="#b3c7e3"/><rect x="569.1" y="75.0" width="6.0" height="6.0" fill="#e6e3ee"/><rect x="569.1" y="81.0" width="6.0" height="6.0" fill="#4a80c8"/><rect x="575.1" y="75.0" width="6.0" height="6.0" fill="#bacde9"/><rect x="575.1" y="81.0" width="6.0" height="6.0" fill="#5281c1"/><rect x="581.2" y="87.1" width="6.0" height="6.0" fill="#d5d0e3"/><rect x="587.2" y="81.0" width="6.0" height="6.0" fill="#336bb5"/><rect x="587.2" y="87.1" width="6.0" height="6.0" fill="#d0ddf0"/><rect x="593.3" y="81.0" width="6.0" height="6.0" fill="#8eb0dd"/><rect x="593.3" y="87.1" width="6.0" height="6.0" fill="#d0ddee"/><rect x="605.4" y="75.0" width="6.0" height="6.0" fill="#e1e8f4"/><rect x="605.4" y="81.0" width="6.0" height="6.0" fill="#7ca0d0"/><rect x="611.5" y="75.0" width="6.0" height="6.0" fill="#a9bce0"/><rect x="611.5" y="81.0" width="6.0" height="6.0" fill="#609ddd"/><rect x="611.5" y="87.1" width="6.0" height="6.0" fill="#c1d5ec"/><rect x="617.5" y="75.0" width="6.0" height="6.0" fill="#adc3e1"/><rect x="617.5" y="81.0" width="6.0" height="6.0" fill="#3f73ba"/><rect x="629.6" y="81.0" width="6.0" height="6.0" fill="#5b7fc4"/><rect x="641.7" y="81.0" width="6.0" height="6.0" fill="#aea4c8"/><rect x="647.8" y="75.0" width="6.0" height="6.0" fill="#b0b7d9"/><rect x="647.8" y="81.0" width="6.0" height="6.0" fill="#2a62b0"/><rect x="647.8" y="87.1" width="6.0" height="6.0" fill="#9fbbe2"/><rect x="653.8" y="81.0" width="6.0" height="6.0" fill="#5295da"/><rect x="653.8" y="87.1" width="6.0" height="6.0" fill="#ccd8eb"/><rect x="659.8" y="81.0" width="6.0" height="6.0" fill="#9a8ebb"/><rect x="659.8" y="87.1" width="6.0" height="6.0" fill="#d8d3e5"/><rect x="678.0" y="81.0" width="6.0" height="6.0" fill="#939dcb"/><rect x="684.0" y="81.0" width="6.0" height="6.0" fill="#8aa3d5"/><rect x="684.0" y="87.1" width="6.0" height="6.0" fill="#e1e8f4"/><rect x="690.1" y="81.0" width="6.0" height="6.0" fill="#538aca"/><rect x="690.1" y="87.1" width="6.0" height="6.0" fill="#dee7f3"/><rect x="696.1" y="81.0" width="6.0" height="6.0" fill="#6492d0"/><rect x="702.2" y="75.0" width="6.0" height="6.0" fill="#c8d7eb"/><rect x="702.2" y="81.0" width="6.0" height="6.0" fill="#6b92c8"/><rect x="702.2" y="87.1" width="6.0" height="6.0" fill="#93b1d8"/><rect x="706" y="87" width="5" height="5" fill="#4a80c8"/><rect x="713" y="87" width="4" height="5" fill="#7aa4dc"/><rect x="95.0" y="209.0" width="6.0" height="6.0" fill="#bec4e0"/><rect x="95.0" y="215.0" width="6.0" height="6.0" fill="#e6f0fa"/><rect x="101.0" y="203.0" width="6.0" height="6.0" fill="#bfd0e8"/><rect x="101.0" y="209.0" width="6.0" height="6.0" fill="#afc5e2"/><rect x="107.0" y="209.0" width="6.0" height="6.0" fill="#aecdee"/><rect x="107.0" y="215.0" width="6.0" height="6.0" fill="#e4e7f2"/><rect x="113.0" y="209.0" width="6.0" height="6.0" fill="#afc8e6"/><rect x="125.0" y="209.0" width="6.0" height="6.0" fill="#b5c9e4"/><rect x="125.0" y="215.0" width="6.0" height="6.0" fill="#becee5"/><rect x="131.0" y="209.0" width="6.0" height="6.0" fill="#b4c4e4"/><rect x="131.0" y="215.0" width="6.0" height="6.0" fill="#c7d7ed"/><rect x="137.0" y="209.0" width="6.0" height="6.0" fill="#d3cde1"/><rect x="149.0" y="203.0" width="6.0" height="6.0" fill="#d9d4e5"/><rect x="149.0" y="209.0" width="6.0" height="6.0" fill="#afc5e2"/><rect x="149.0" y="215.0" width="6.0" height="6.0" fill="#e6e9f3"/><rect x="155.0" y="209.0" width="6.0" height="6.0" fill="#95b3dd"/><rect x="161.0" y="203.0" width="6.0" height="6.0" fill="#e9f0f8"/><rect x="161.0" y="209.0" width="6.0" height="6.0" fill="#ccdff4"/><rect x="161.0" y="215.0" width="6.0" height="6.0" fill="#e3ebf6"/><rect x="167.0" y="203.0" width="6.0" height="6.0" fill="#b9cce5"/><rect x="167.0" y="209.0" width="6.0" height="6.0" fill="#a4c1e3"/><rect x="173.0" y="209.0" width="6.0" height="6.0" fill="#92b5de"/><rect x="179.0" y="209.0" width="6.0" height="6.0" fill="#a0b7d9"/><rect x="185.0" y="209.0" width="6.0" height="6.0" fill="#abc1e0"/><rect x="197.0" y="209.0" width="6.0" height="6.0" fill="#7c9bcb"/><rect x="197.0" y="215.0" width="6.0" height="6.0" fill="#e3ecf6"/><rect x="203.0" y="209.0" width="6.0" height="6.0" fill="#ccdff4"/><rect x="209.0" y="209.0" width="6.0" height="6.0" fill="#dedae9"/><rect x="209.0" y="215.0" width="6.0" height="6.0" fill="#c4d7ed"/><rect x="221.0" y="209.0" width="6.0" height="6.0" fill="#a7bcdc"/><rect x="221.0" y="215.0" width="6.0" height="6.0" fill="#c4d4e9"/><rect x="227.0" y="209.0" width="6.0" height="6.0" fill="#86a8d8"/><rect x="233.0" y="209.0" width="6.0" height="6.0" fill="#b8cde9"/><rect x="233.0" y="215.0" width="6.0" height="6.0" fill="#cfdef0"/><rect x="239.0" y="209.0" width="6.0" height="6.0" fill="#aec5e5"/><rect x="251.0" y="203.0" width="6.0" height="6.0" fill="#ceddf0"/><rect x="251.0" y="209.0" width="6.0" height="6.0" fill="#a4bfe3"/><rect x="257.0" y="209.0" width="6.0" height="6.0" fill="#c1c7e1"/><rect x="263.0" y="209.0" width="6.0" height="6.0" fill="#c1bad5"/><rect x="275.0" y="209.0" width="6.0" height="6.0" fill="#bec4e0"/><rect x="281.0" y="215.0" width="6.0" height="6.0" fill="#eff1f8"/><rect x="287.0" y="203.0" width="6.0" height="6.0" fill="#ebf1f9"/><rect x="293.0" y="209.0" width="6.0" height="6.0" fill="#c6d2ea"/><rect x="305.0" y="209.0" width="6.0" height="6.0" fill="#d8d3e5"/><rect x="311.0" y="209.0" width="6.0" height="6.0" fill="#a9bfdf"/><rect x="311.0" y="215.0" width="6.0" height="6.0" fill="#e2eaf6"/><rect x="317.0" y="209.0" width="6.0" height="6.0" fill="#88aeda"/><rect x="323.0" y="209.0" width="6.0" height="6.0" fill="#acc3e4"/><rect x="335.0" y="209.0" width="6.0" height="6.0" fill="#a3bbdd"/><rect x="335.0" y="215.0" width="6.0" height="6.0" fill="#f0f5fa"/><rect x="341.0" y="209.0" width="6.0" height="6.0" fill="#acc7e6"/><rect x="341.0" y="215.0" width="6.0" height="6.0" fill="#d6e3f2"/><rect x="347.0" y="203.0" width="6.0" height="6.0" fill="#c7d9ee"/><rect x="347.0" y="209.0" width="6.0" height="6.0" fill="#c0b9d5"/><rect x="347.0" y="215.0" width="6.0" height="6.0" fill="#e4e7f2"/><rect x="365.0" y="209.0" width="6.0" height="6.0" fill="#b9cce6"/><rect x="371.0" y="209.0" width="6.0" height="6.0" fill="#a2c6eb"/><rect x="371.0" y="215.0" width="6.0" height="6.0" fill="#e5edf7"/><rect x="383.0" y="209.0" width="6.0" height="6.0" fill="#c5dbf3"/><rect x="389.0" y="209.0" width="6.0" height="6.0" fill="#aec2df"/><rect x="389.0" y="215.0" width="6.0" height="6.0" fill="#d3e1f1"/><rect x="395.0" y="203.0" width="6.0" height="6.0" fill="#d9e4f3"/><rect x="395.0" y="209.0" width="6.0" height="6.0" fill="#9cb8df"/><rect x="401.0" y="209.0" width="6.0" height="6.0" fill="#acc0de"/><rect x="401.0" y="215.0" width="6.0" height="6.0" fill="#d3e1f2"/><rect x="407.0" y="209.0" width="6.0" height="6.0" fill="#97b8df"/><rect x="407.0" y="215.0" width="6.0" height="6.0" fill="#e2eef9"/><rect x="413.0" y="209.0" width="6.0" height="6.0" fill="#d1d5e9"/><rect x="413.0" y="215.0" width="6.0" height="6.0" fill="#c1d2e8"/><rect x="419.0" y="209.0" width="6.0" height="6.0" fill="#bccfea"/><rect x="419.0" y="215.0" width="6.0" height="6.0" fill="#e9eef7"/><rect x="425.0" y="203.0" width="6.0" height="6.0" fill="#c8d4eb"/><rect x="425.0" y="209.0" width="6.0" height="6.0" fill="#89aad5"/><rect x="425.0" y="215.0" width="6.0" height="6.0" fill="#eef0f7"/><rect x="431.0" y="209.0" width="6.0" height="6.0" fill="#bcb4d2"/><rect x="443.0" y="215.0" width="6.0" height="6.0" fill="#cbdaee"/><rect x="449.0" y="203.0" width="6.0" height="6.0" fill="#dfe8f3"/><rect x="449.0" y="209.0" width="6.0" height="6.0" fill="#b8d4f0"/><rect x="449.0" y="215.0" width="6.0" height="6.0" fill="#c0cfe6"/><rect x="455.0" y="209.0" width="6.0" height="6.0" fill="#b9b1d0"/><rect x="455.0" y="215.0" width="6.0" height="6.0" fill="#c1d1e8"/><rect x="461.0" y="209.0" width="6.0" height="6.0" fill="#92acd4"/><rect x="461.0" y="215.0" width="6.0" height="6.0" fill="#d1def0"/><rect x="467.0" y="203.0" width="6.0" height="6.0" fill="#e9eff8"/><rect x="467.0" y="209.0" width="6.0" height="6.0" fill="#96b1d8"/><rect x="473.0" y="209.0" width="6.0" height="6.0" fill="#c0d3ec"/><rect x="473.0" y="215.0" width="6.0" height="6.0" fill="#c5d5ec"/><rect x="479.0" y="203.0" width="6.0" height="6.0" fill="#d8d4e5"/><rect x="479.0" y="209.0" width="6.0" height="6.0" fill="#dcd8e8"/><rect x="479.0" y="215.0" width="6.0" height="6.0" fill="#f1f5fb"/><rect x="485.0" y="215.0" width="6.0" height="6.0" fill="#d4e1f2"/><rect x="497.0" y="209.0" width="6.0" height="6.0" fill="#8dacd6"/><rect x="497.0" y="215.0" width="6.0" height="6.0" fill="#cde1f4"/><rect x="503.0" y="209.0" width="6.0" height="6.0" fill="#94b3dd"/><rect x="503.0" y="215.0" width="6.0" height="6.0" fill="#cadef4"/><rect x="509.0" y="209.0" width="6.0" height="6.0" fill="#afb7d9"/><rect x="515.0" y="203.0" width="6.0" height="6.0" fill="#c8d4eb"/><rect x="515.0" y="209.0" width="6.0" height="6.0" fill="#b2c6e2"/><rect x="515.0" y="215.0" width="6.0" height="6.0" fill="#e6effa"/><rect x="527.0" y="203.0" width="6.0" height="6.0" fill="#e9e6f0"/><rect x="533.0" y="209.0" width="6.0" height="6.0" fill="#a8bddc"/><rect x="533.0" y="215.0" width="6.0" height="6.0" fill="#c1d2e9"/><rect x="539.0" y="203.0" width="6.0" height="6.0" fill="#d8dcec"/><rect x="539.0" y="209.0" width="6.0" height="6.0" fill="#acc0de"/><rect x="545.0" y="209.0" width="6.0" height="6.0" fill="#bacce5"/><rect x="551.0" y="209.0" width="6.0" height="6.0" fill="#c0c6e1"/><rect x="551.0" y="215.0" width="6.0" height="6.0" fill="#e6ecf5"/><rect x="557.0" y="209.0" width="6.0" height="6.0" fill="#dcd8e7"/><rect x="563.0" y="203.0" width="6.0" height="6.0" fill="#ceddf0"/><rect x="563.0" y="209.0" width="6.0" height="6.0" fill="#9cbae1"/><rect x="563.0" y="215.0" width="6.0" height="6.0" fill="#e4e7f2"/><rect x="569.0" y="209.0" width="6.0" height="6.0" fill="#c2c8e2"/><rect x="569.0" y="215.0" width="6.0" height="6.0" fill="#e2e9f4"/><rect x="575.0" y="203.0" width="6.0" height="6.0" fill="#e2eaf6"/><rect x="575.0" y="209.0" width="6.0" height="6.0" fill="#d2d6e9"/><rect x="575.0" y="215.0" width="6.0" height="6.0" fill="#c6d5ea"/><rect x="587.0" y="209.0" width="6.0" height="6.0" fill="#c1bad5"/><rect x="587.0" y="215.0" width="6.0" height="6.0" fill="#c9d7eb"/><rect x="593.0" y="203.0" width="6.0" height="6.0" fill="#bdcfea"/><rect x="593.0" y="209.0" width="6.0" height="6.0" fill="#ccd1e7"/><rect x="593.0" y="215.0" width="6.0" height="6.0" fill="#d1dff1"/><rect x="95.0" y="244.5" width="6.0" height="6.0" fill="#edf2f9"/><rect x="95.0" y="250.5" width="6.0" height="6.0" fill="#bcc2df"/><rect x="101.0" y="250.5" width="6.0" height="6.0" fill="#8faed7"/><rect x="101.0" y="256.5" width="6.0" height="6.0" fill="#d5e1f2"/><rect x="107.0" y="250.5" width="6.0" height="6.0" fill="#adc7e6"/><rect x="113.0" y="250.5" width="6.0" height="6.0" fill="#ced3e8"/><rect x="119.0" y="244.5" width="6.0" height="6.0" fill="#dbe9f7"/><rect x="119.0" y="250.5" width="6.0" height="6.0" fill="#b5c7e2"/><rect x="119.0" y="256.5" width="6.0" height="6.0" fill="#d0ddf0"/><rect x="131.0" y="250.5" width="6.0" height="6.0" fill="#adc3e1"/><rect x="131.0" y="256.5" width="6.0" height="6.0" fill="#e7e9f3"/><rect x="137.0" y="244.5" width="6.0" height="6.0" fill="#d0dff1"/><rect x="137.0" y="250.5" width="6.0" height="6.0" fill="#cfdef0"/><rect x="143.0" y="250.5" width="6.0" height="6.0" fill="#c4d2e7"/><rect x="149.0" y="250.5" width="6.0" height="6.0" fill="#a1c5eb"/><rect x="149.0" y="256.5" width="6.0" height="6.0" fill="#d4dfef"/><rect x="155.0" y="250.5" width="6.0" height="6.0" fill="#cac4db"/><rect x="161.0" y="250.5" width="6.0" height="6.0" fill="#c1d2eb"/><rect x="161.0" y="256.5" width="6.0" height="6.0" fill="#dce6f4"/><rect x="173.0" y="244.5" width="6.0" height="6.0" fill="#d7e7f6"/><rect x="173.0" y="256.5" width="6.0" height="6.0" fill="#c7d6ea"/><rect x="179.0" y="250.5" width="6.0" height="6.0" fill="#cbd6ec"/><rect x="185.0" y="244.5" width="6.0" height="6.0" fill="#c4d4ea"/><rect x="185.0" y="250.5" width="6.0" height="6.0" fill="#c4d5ed"/><rect x="185.0" y="256.5" width="6.0" height="6.0" fill="#e1edf9"/><rect x="191.0" y="250.5" width="6.0" height="6.0" fill="#c6d5ea"/><rect x="197.0" y="250.5" width="6.0" height="6.0" fill="#d4cfe2"/><rect x="203.0" y="244.5" width="6.0" height="6.0" fill="#e2ebf6"/><rect x="203.0" y="250.5" width="6.0" height="6.0" fill="#a4bfe3"/><rect x="203.0" y="256.5" width="6.0" height="6.0" fill="#d2dff1"/><rect x="215.0" y="250.5" width="6.0" height="6.0" fill="#bed2eb"/><rect x="221.0" y="244.5" width="6.0" height="6.0" fill="#e8f1fa"/><rect x="221.0" y="250.5" width="6.0" height="6.0" fill="#abc1e0"/><rect x="227.0" y="250.5" width="6.0" height="6.0" fill="#b2c3e3"/><rect x="227.0" y="256.5" width="6.0" height="6.0" fill="#eaf1f9"/><rect x="233.0" y="250.5" width="6.0" height="6.0" fill="#dfdbea"/><rect x="239.0" y="250.5" width="6.0" height="6.0" fill="#d8dbec"/><rect x="239.0" y="256.5" width="6.0" height="6.0" fill="#d5e2f2"/><rect x="251.0" y="244.5" width="6.0" height="6.0" fill="#e1e4f1"/><rect x="251.0" y="250.5" width="6.0" height="6.0" fill="#c8cde5"/><rect x="251.0" y="256.5" width="6.0" height="6.0" fill="#e9eff7"/><rect x="257.0" y="244.5" width="6.0" height="6.0" fill="#d0dcee"/><rect x="257.0" y="250.5" width="6.0" height="6.0" fill="#b1cfee"/><rect x="257.0" y="256.5" width="6.0" height="6.0" fill="#d5def0"/><rect x="263.0" y="244.5" width="6.0" height="6.0" fill="#e7edf6"/><rect x="269.0" y="244.5" width="6.0" height="6.0" fill="#e1ddeb"/><rect x="269.0" y="250.5" width="6.0" height="6.0" fill="#cbc4dc"/><rect x="281.0" y="250.5" width="6.0" height="6.0" fill="#c0b8d4"/><rect x="293.0" y="250.5" width="6.0" height="6.0" fill="#a4c1e3"/><rect x="299.0" y="244.5" width="6.0" height="6.0" fill="#e9eff7"/><rect x="299.0" y="250.5" width="6.0" height="6.0" fill="#a5b9df"/><rect x="305.0" y="250.5" width="6.0" height="6.0" fill="#9fbce2"/><rect x="311.0" y="250.5" width="6.0" height="6.0" fill="#b6cae5"/><rect x="323.0" y="244.5" width="6.0" height="6.0" fill="#dbe5f3"/><rect x="323.0" y="250.5" width="6.0" height="6.0" fill="#bfcee6"/><rect x="329.0" y="250.5" width="6.0" height="6.0" fill="#d0e2f5"/><rect x="329.0" y="256.5" width="6.0" height="6.0" fill="#e4eef9"/><rect x="335.0" y="244.5" width="6.0" height="6.0" fill="#d8e7f7"/><rect x="335.0" y="250.5" width="6.0" height="6.0" fill="#bad0ea"/><rect x="335.0" y="256.5" width="6.0" height="6.0" fill="#cddbed"/><rect x="341.0" y="244.5" width="6.0" height="6.0" fill="#e0ecf8"/><rect x="341.0" y="250.5" width="6.0" height="6.0" fill="#bbcbe4"/><rect x="347.0" y="250.5" width="6.0" height="6.0" fill="#bfb7d4"/><rect x="347.0" y="256.5" width="6.0" height="6.0" fill="#e3ecf7"/><rect x="353.0" y="250.5" width="6.0" height="6.0" fill="#b2c6e2"/><rect x="365.0" y="250.5" width="6.0" height="6.0" fill="#c1d1e8"/><rect x="371.0" y="244.5" width="6.0" height="6.0" fill="#cfdcee"/><rect x="371.0" y="250.5" width="6.0" height="6.0" fill="#aec1df"/><rect x="377.0" y="244.5" width="6.0" height="6.0" fill="#e0ddea"/><rect x="377.0" y="250.5" width="6.0" height="6.0" fill="#c1d4ec"/><rect x="389.0" y="250.5" width="6.0" height="6.0" fill="#b2c9e7"/><rect x="395.0" y="250.5" width="6.0" height="6.0" fill="#dfdbe9"/><rect x="401.0" y="250.5" width="6.0" height="6.0" fill="#c9d5ec"/><rect x="407.0" y="256.5" width="6.0" height="6.0" fill="#e7ecf6"/><rect x="419.0" y="250.5" width="6.0" height="6.0" fill="#b2b9da"/><rect x="419.0" y="256.5" width="6.0" height="6.0" fill="#e7eef8"/><rect x="431.0" y="250.5" width="6.0" height="6.0" fill="#acc2e0"/><rect x="431.0" y="256.5" width="6.0" height="6.0" fill="#cbd9ec"/><rect x="437.0" y="250.5" width="6.0" height="6.0" fill="#88a5d0"/><rect x="443.0" y="250.5" width="6.0" height="6.0" fill="#a6badf"/><rect x="449.0" y="250.5" width="6.0" height="6.0" fill="#bed1eb"/><rect x="455.0" y="250.5" width="6.0" height="6.0" fill="#99b5da"/><rect x="461.0" y="250.5" width="6.0" height="6.0" fill="#a7bede"/><rect x="467.0" y="250.5" width="6.0" height="6.0" fill="#b1c7e6"/><rect x="467.0" y="256.5" width="6.0" height="6.0" fill="#cad8eb"/><rect x="473.0" y="250.5" width="6.0" height="6.0" fill="#bbcee9"/><rect x="479.0" y="250.5" width="6.0" height="6.0" fill="#b8cce6"/><rect x="479.0" y="256.5" width="6.0" height="6.0" fill="#edf2f9"/><rect x="491.0" y="250.5" width="6.0" height="6.0" fill="#c5d6ed"/><rect x="503.0" y="250.5" width="6.0" height="6.0" fill="#a8bbe0"/><rect x="509.0" y="244.5" width="6.0" height="6.0" fill="#e3eef9"/><rect x="509.0" y="250.5" width="6.0" height="6.0" fill="#c7ddf3"/><rect x="509.0" y="256.5" width="6.0" height="6.0" fill="#d9e3f1"/><rect x="515.0" y="244.5" width="6.0" height="6.0" fill="#d9e3f1"/><rect x="515.0" y="250.5" width="6.0" height="6.0" fill="#d4cee2"/><rect x="521.0" y="250.5" width="6.0" height="6.0" fill="#d9d5e6"/><rect x="521.0" y="256.5" width="6.0" height="6.0" fill="#e9f0f8"/><rect x="533.0" y="244.5" width="6.0" height="6.0" fill="#dfe8f4"/><rect x="533.0" y="250.5" width="6.0" height="6.0" fill="#bac0de"/><rect x="533.0" y="256.5" width="6.0" height="6.0" fill="#dbe9f7"/><rect x="545.0" y="250.5" width="6.0" height="6.0" fill="#96b1d8"/><rect x="545.0" y="256.5" width="6.0" height="6.0" fill="#dbe9f7"/><rect x="551.0" y="244.5" width="6.0" height="6.0" fill="#c1d0e6"/><rect x="551.0" y="250.5" width="6.0" height="6.0" fill="#a4bcdd"/><rect x="557.0" y="244.5" width="6.0" height="6.0" fill="#c2d3e9"/><rect x="557.0" y="250.5" width="6.0" height="6.0" fill="#adc2e0"/><rect x="563.0" y="250.5" width="6.0" height="6.0" fill="#b7bedd"/><rect x="563.0" y="256.5" width="6.0" height="6.0" fill="#f0eff5"/><rect x="569.0" y="250.5" width="6.0" height="6.0" fill="#d5d9eb"/><rect x="569.0" y="256.5" width="6.0" height="6.0" fill="#e4ebf5"/><rect x="575.0" y="250.5" width="6.0" height="6.0" fill="#b6d2ef"/><rect x="581.0" y="250.5" width="6.0" height="6.0" fill="#c9cee5"/><rect x="581.0" y="256.5" width="6.0" height="6.0" fill="#d7e2f2"/></svg>
    <div class="tl b" style="top:76px;left:717.5px;color:#0b4fa8;font-weight:bold">/python-http-with-3rd<span style="color:#333;font-weight:normal">$ s build --zip-pack</span></div>
    <div class="tl" style="top:97px"><span style="color:#d9962b;font-size:12px">&#8987;</span></div>
    <div class="tl" style="top:97px;left:60.5px">Steps for [build] of [hello-app]</div>
    <div class="tl" style="top:120px;color:#666">====================</div>
    <div class="tl" style="top:160px;color:#222;font-weight:bold">---------------------------------------------------------------------------------</div>
    <div class="tl" style="top:181px;color:#222;font-weight:bold">    Input source path:</div>
    <div class="tl" style="top:202px;left:609.5px;color:#0b4fa8">/python-http-with-3rd/code</div>
    <div class="tl" style="top:223px;color:#222;font-weight:bold">    Output code path:</div>
    <div class="tl" style="top:244px;left:609.5px;color:#0b4fa8">/python-http-with-3rd/code</div>
    <div class="tl" style="top:265px;color:#222;font-weight:bold">---------------------------------------------------------------------------------</div>
    <div class="rbox" style="left:920px;top:69.5px;width:170px;height:31px"></div>
    <div class="abs" style="left:1097px;top:53px;width:1px;height:260px;background:#dcdcdc"></div>
    <div class="abs" style="left:1098px;top:53px;width:15px;height:25px;background:#f7f7f7"></div>
    <div class="abs" style="left:1097px;top:53px;width:16px;height:1px;background:#dcdcdc"></div>
    <div class="abs" style="left:1113px;top:42px;width:1px;height:270px;background:#dcdcdc"></div>
    <div class="abs" style="left:1114px;top:42.300px;width:56px;height:25.400px;background:#e4e6f1"></div>
  </div>
  <div id="status" class="abs">
    <div class="abs" style="left:0;top:0;width:40px;height:26px;background:#16825d"></div>
    <svg class="abs" style="left:13px;top:4.5px" width="13.500" height="15" viewBox="0 0 13.500 15" fill="none" stroke="#ffffff" stroke-width="1.25" stroke-linecap="round" stroke-linejoin="round" stroke-width="1.400"><path d="M1 5.800 5.800 10 1 14.200M12.200 .8 7.600 4.900 12.200 9"/></svg><svg class="abs" style="left:50px;top:4.6px" width="16" height="16" viewBox="0 0 16 16" fill="none" stroke="#ffffff" stroke-width="1.25" stroke-linecap="round" stroke-linejoin="round"><circle cx="8" cy="7.800" r="7"/><path d="M5.300 5.100 10.700 10.500M10.700 5.100 5.300 10.500"/></svg><svg class="abs" style="left:82.5px;top:4.6px" width="16" height="15" viewBox="0 0 16 15" fill="none" stroke="#ffffff" stroke-width="1.25" stroke-linecap="round" stroke-linejoin="round"><path d="M8 1.200 15 14H1z"/><path d="M8 5.800V10M8 11.700v.4" stroke-width="1.400"/></svg><svg class="abs" style="left:1306.5px;top:5.6px" width="14" height="14" viewBox="0 0 14 14" fill="none" stroke="#ffffff" stroke-width="1.25" stroke-linecap="round" stroke-linejoin="round" stroke-width="1.200"><path d="M4.600.8C3.200.8 2.800 1.500 2.800 2.600v2.200c0 1-.5 1.600-1.800 1.700 1.300.1 1.800.7 1.800 1.700v2.200c0 1.100.4 1.800 1.800 1.800M9.400.8c1.400 0 1.800.7 1.800 1.800v2.200c0 1 .5 1.600 1.800 1.700-1.300.1-1.800.7-1.800 1.700v2.200c0 1.100-.4 1.800-1.800 1.800"/></svg><svg class="abs" style="left:1382.8px;top:5px" width="19" height="15.500" viewBox="0 0 19 15.500"><path fill="#fff" d="M9.500 2.300C8.800 1 7.500.4 5.900.6 3.800.8 2.800 2 2.800 3.800c0 .9.100 1.700-.2 2.300C1.400 6.800.5 7.800.5 9.200v1.900c0 .5.300.9.700 1.200 2.300 1.700 5.300 2.700 8.300 2.700s6-1 8.300-2.700c.4-.3.700-.7.700-1.200V9.200c0-1.400-.9-2.400-2.100-3.100-.3-.6-.2-1.400-.2-2.300 0-1.800-1-3-3.100-3.200-1.600-.2-2.900.400-3.600 1.700z"/><g fill="#007acc"><rect x="4.100" y="2" width="4.200" height="4.200" rx="1.700"/><rect x="10.700" y="2" width="4.200" height="4.200" rx="1.700"/><path d="M4.500 8.300h10v3.600c-1.500.8-3.300 1.200-5 1.200s-3.500-.4-5-1.200z"/></g><g fill="#fff"><rect x="6.400" y="9" width="1.700" height="3" rx=".8"/><rect x="10.900" y="9" width="1.700" height="3" rx=".8"/></g></svg><svg class="abs" style="left:1421px;top:4.6px" width="15" height="16" viewBox="0 0 15 16" fill="none" stroke="#ffffff" stroke-width="1.25" stroke-linecap="round" stroke-linejoin="round"><path d="M1.200 12.200c1-1 1.700-2 1.700-3.700V6.200a4.600 4.600 0 0 1 9.200 0v2.300c0 1.700.7 2.700 1.700 3.700z"/><path d="M6.200 12.400a1.300 1.300 0 0 0 2.600 0" /></svg><span style="left:70.800px;transform:scaleX(0.9785);transform-origin:0 50%">0</span><span style="left:103.200px;transform:scaleX(0.9785);transform-origin:0 50%">0</span>
    <span style="left:1018px;transform:scaleX(1.0176);transform-origin:0 50%">Ln 26, Col 29</span>
    <span style="left:1118.500px;transform:scaleX(0.9608);transform-origin:0 50%">Spaces: 2</span>
    <span style="left:1197px;transform:scaleX(0.9866);transform-origin:0 50%">UTF-8</span>
    <span style="left:1254px;transform:scaleX(0.8592);transform-origin:0 50%">CRLF</span>
    <span style="left:1329px;transform:scaleX(0.9801);transform-origin:0 50%">YAML</span>
  </div>
  <div class="abs red" style="left:106.300px;top:282px;font-size:28px;line-height:36px;white-space:nowrap;word-spacing:-2px;z-index:9">2. <span class="cj">生成构建产物</span></div>
  <div class="abs red" style="left:1226.500px;top:524.500px;font-size:28px;line-height:36px;white-space:nowrap;word-spacing:-1px;z-index:9">1. <span class="cj">执行</span><span class="lt">build</span><span class="cj">命令</span></div>
</div>
<div id="edge"></div>
<svg class="abs" style="left:0;top:0;z-index:20" width="1456" height="3"><rect x="520" y="0" width="3" height="1.2" fill="#3a3a3a"/><rect x="525" y="0" width="8" height="2" fill="#3a3a3a"/><rect x="534" y="0" width="8" height="1.6" fill="#3a3a3a"/><rect x="544" y="0" width="8" height="2" fill="#3a3a3a"/><rect x="580" y="0" width="3" height="1.2" fill="#3a3a3a"/><rect x="594" y="0" width="6" height="1.6" fill="#3a3a3a"/><rect x="616" y="0" width="2" height="1.2" fill="#3a3a3a"/><rect x="620" y="0" width="3" height="2" fill="#3a3a3a"/><rect x="625" y="0" width="6" height="1.6" fill="#3a3a3a"/><rect x="633" y="0" width="8" height="2" fill="#3a3a3a"/><rect x="648" y="0" width="2" height="2" fill="#3a3a3a"/><rect x="709" y="0" width="4" height="1.6" fill="#3a3a3a"/><rect x="716" y="0" width="2" height="1.2" fill="#3a3a3a"/><rect x="721" y="0" width="3" height="1.6" fill="#3a3a3a"/><rect x="727" y="0" width="2" height="2" fill="#3a3a3a"/><rect x="748" y="0" width="8" height="1.2" fill="#3a3a3a"/><rect x="758" y="0" width="2" height="2" fill="#3a3a3a"/><rect x="766" y="0" width="8" height="2" fill="#3a3a3a"/><rect x="775" y="0" width="2" height="1.6" fill="#3a3a3a"/><rect x="779" y="0" width="2" height="1.6" fill="#3a3a3a"/><rect x="806" y="0" width="4" height="1.6" fill="#3a3a3a"/><rect x="812" y="0" width="8" height="1.6" fill="#3a3a3a"/><rect x="822" y="0" width="2" height="2" fill="#3a3a3a"/><rect x="830" y="0" width="6" height="1.6" fill="#3a3a3a"/><rect x="838" y="0" width="3" height="2" fill="#3a3a3a"/><rect x="842" y="0" width="3" height="1.6" fill="#3a3a3a"/><rect x="847" y="0" width="3" height="2" fill="#3a3a3a"/><rect x="852" y="0" width="3" height="1.6" fill="#3a3a3a"/><rect x="857" y="0" width="2" height="1.6" fill="#3a3a3a"/><rect x="875" y="0" width="4" height="2" fill="#3a3a3a"/><rect x="881" y="0" width="3" height="2" fill="#3a3a3a"/><rect x="891" y="0" width="8" height="1.6" fill="#3a3a3a"/><rect x="909" y="0" width="2" height="2" fill="#3a3a3a"/><rect x="913" y="0" width="8" height="1.2" fill="#3a3a3a"/><rect x="922" y="0" width="2" height="1.2" fill="#3a3a3a"/><rect x="930" y="0" width="2" height="2" fill="#3a3a3a"/><rect x="933" y="0" width="2" height="2" fill="#3a3a3a"/><rect x="937" y="0" width="6" height="1.6" fill="#3a3a3a"/><rect x="952" y="0" width="6" height="1.2" fill="#3a3a3a"/><rect x="961" y="0" width="3" height="1.6" fill="#3a3a3a"/><rect x="981" y="0" width="8" height="1.2" fill="#3a3a3a"/><rect x="990" y="0" width="2" height="1.6" fill="#3a3a3a"/><rect x="993" y="0" width="2" height="1.2" fill="#3a3a3a"/><rect x="997" y="0" width="6" height="1.2" fill="#3a3a3a"/><rect x="1006" y="0" width="3" height="2" fill="#3a3a3a"/><rect x="1039" y="0" width="4" height="2" fill="#3a3a3a"/><rect x="1050" y="0" width="3" height="2" fill="#3a3a3a"/><rect x="1054" y="0" width="3" height="1.6" fill="#3a3a3a"/></svg>
</body>
</html>
